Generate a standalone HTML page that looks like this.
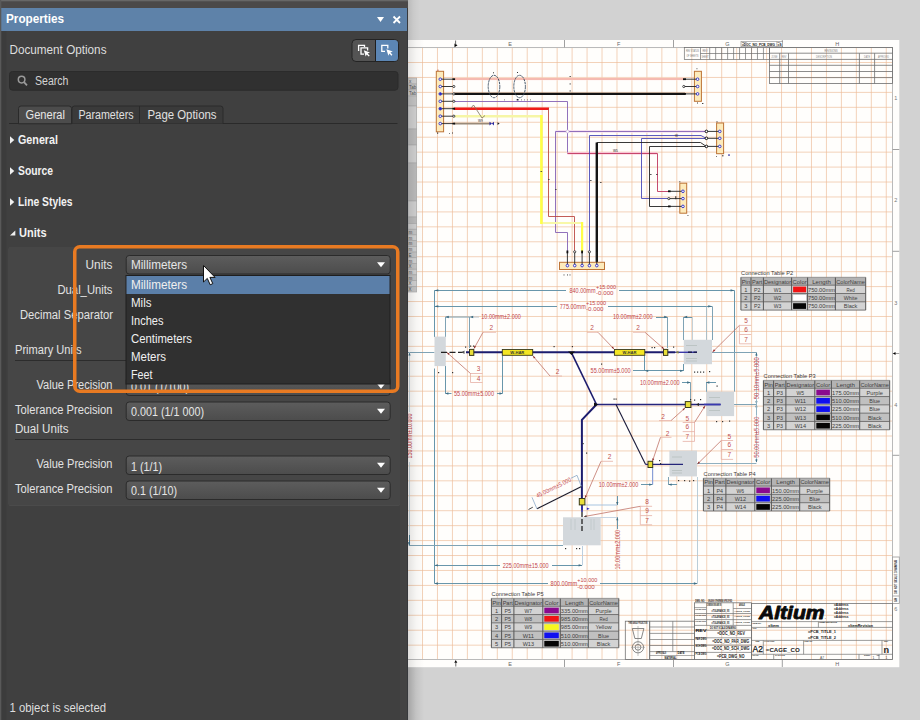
<!DOCTYPE html>
<html><head><meta charset="utf-8"><title>Properties</title>
<style>
html,body{margin:0;padding:0;background:#d2d2d2;overflow:hidden}
svg{display:block;font-family:"Liberation Sans",sans-serif}
</style></head><body>
<svg width="920" height="720" viewBox="0 0 920 720">
<defs>
<linearGradient id="ddg" x1="0" y1="0" x2="0" y2="1"><stop offset="0" stop-color="#5d5d5d"/><stop offset="1" stop-color="#4c4c4c"/></linearGradient>
<pattern id="grid" x="422" y="62" width="14.96" height="14.94" patternUnits="userSpaceOnUse"><path d="M0 0.5 H15 M0.5 0 V15" stroke="#ecb994" stroke-width="0.65" fill="none"/></pattern>
<linearGradient id="shd" x1="0" y1="0" x2="1" y2="0"><stop offset="0" stop-color="#000" stop-opacity="0.22"/><stop offset="0.5" stop-color="#000" stop-opacity="0.07"/><stop offset="1" stop-color="#000" stop-opacity="0"/></linearGradient>
</defs>
<rect x="0" y="0" width="920" height="720" fill="#d2d2d2"/>
<rect x="400" y="40" width="499.3" height="627.2" fill="#fffefc"/>
<rect x="408" y="47.5" width="484.5" height="612" fill="url(#grid)"/>
<path d="M400 47.5 H892.5 V659.5 H400" fill="none" stroke="#bababa" stroke-width="1"/>
<line x1="564.5" y1="40" x2="564.5" y2="47.5" stroke="#a0a0a0" stroke-width="1"/>
<line x1="564.5" y1="659.5" x2="564.5" y2="667" stroke="#a0a0a0" stroke-width="1"/>
<line x1="673.5" y1="40" x2="673.5" y2="47.5" stroke="#a0a0a0" stroke-width="1"/>
<line x1="673.5" y1="659.5" x2="673.5" y2="667" stroke="#a0a0a0" stroke-width="1"/>
<line x1="782.3" y1="40" x2="782.3" y2="47.5" stroke="#a0a0a0" stroke-width="1"/>
<line x1="782.3" y1="659.5" x2="782.3" y2="667" stroke="#a0a0a0" stroke-width="1"/>
<text x="510" y="46.3" font-size="5.5" fill="#666" text-anchor="middle">E</text>
<text x="510" y="666" font-size="5.5" fill="#666" text-anchor="middle">E</text>
<text x="618.7" y="46.3" font-size="5.5" fill="#666" text-anchor="middle">F</text>
<text x="618.7" y="666" font-size="5.5" fill="#666" text-anchor="middle">F</text>
<text x="727.5" y="46.3" font-size="5.5" fill="#666" text-anchor="middle">G</text>
<text x="727.5" y="666" font-size="5.5" fill="#666" text-anchor="middle">G</text>
<text x="837.3" y="46.3" font-size="5.5" fill="#666" text-anchor="middle">H</text>
<text x="837.3" y="666" font-size="5.5" fill="#666" text-anchor="middle">H</text>
<polygon points="454.5,43.5 457.5,45.3 454.5,47.2" fill="#000"/>
<line x1="455.6" y1="40.5" x2="455.6" y2="45" stroke="#444" stroke-width="0.8"/>
<polygon points="454.3,662.8 457.3,662.8 455.8,660" fill="#000"/>
<line x1="455.8" y1="662" x2="455.8" y2="666.5" stroke="#444" stroke-width="0.8"/>
<line x1="892.5" y1="149.5" x2="899.3" y2="149.5" stroke="#a0a0a0" stroke-width="1"/>
<line x1="892.5" y1="251.3" x2="899.3" y2="251.3" stroke="#a0a0a0" stroke-width="1"/>
<line x1="892.5" y1="353.5" x2="899.3" y2="353.5" stroke="#a0a0a0" stroke-width="1"/>
<line x1="892.5" y1="455.3" x2="899.3" y2="455.3" stroke="#a0a0a0" stroke-width="1"/>
<text x="895.7" y="100" font-size="5.5" fill="#777" text-anchor="middle">1</text>
<text x="895.7" y="202" font-size="5.5" fill="#777" text-anchor="middle">2</text>
<text x="895.7" y="305" font-size="5.5" fill="#777" text-anchor="middle">3</text>
<text x="895.7" y="407" font-size="5.5" fill="#777" text-anchor="middle">4</text>
<text x="895.7" y="611" font-size="5.5" fill="#777" text-anchor="middle">6</text>
<polygon points="893,353.5 895.5,352 895.5,355" fill="#000"/>
<rect x="892.5" y="557" width="6.8" height="46.5" fill="#fffefc" stroke="#999" stroke-width="0.8"/>
<line x1="892.5" y1="596" x2="899" y2="596" stroke="#999" stroke-width="0.8"/>
<text x="0" y="0" font-size="3.2" fill="#333" font-weight="bold" textLength="34" lengthAdjust="spacingAndGlyphs" transform="translate(897.3,594) rotate(-90)">DO NOT SCALE DRAWING</text>
<text x="0" y="0" font-size="3" fill="#333" font-weight="bold" transform="translate(897.3,602) rotate(-90)">SH</text>
<rect x="408" y="78" width="8.7" height="214" fill="#c9c9c9"/>
<rect x="408" y="78" width="8.7" height="6" fill="#d2d2d2" stroke="#ababab" stroke-width="0.6"/>
<rect x="408" y="84" width="8.7" height="6" fill="#c6c6c6" stroke="#ababab" stroke-width="0.6"/>
<rect x="408" y="90" width="8.7" height="6" fill="#d2d2d2" stroke="#ababab" stroke-width="0.6"/>
<rect x="408" y="96" width="8.7" height="10" fill="#c6c6c6" stroke="#ababab" stroke-width="0.6"/>
<rect x="408" y="106" width="8.7" height="23" fill="#d2d2d2" stroke="#ababab" stroke-width="0.6"/>
<rect x="408" y="129" width="8.7" height="16" fill="#bdbdbd" stroke="#ababab" stroke-width="0.6"/>
<rect x="408" y="145" width="8.7" height="18" fill="#d2d2d2" stroke="#ababab" stroke-width="0.6"/>
<rect x="408" y="163" width="8.7" height="38" fill="#bdbdbd" stroke="#ababab" stroke-width="0.6"/>
<rect x="408" y="201" width="8.7" height="16" fill="#d2d2d2" stroke="#ababab" stroke-width="0.6"/>
<rect x="408" y="217" width="8.7" height="6.5" fill="#bdbdbd" stroke="#ababab" stroke-width="0.6"/>
<rect x="408" y="223.5" width="8.7" height="5.71" fill="#d2d2d2" stroke="#ababab" stroke-width="0.6"/>
<rect x="408" y="229.21" width="8.7" height="5.71" fill="#c6c6c6" stroke="#ababab" stroke-width="0.6"/>
<rect x="408" y="234.92" width="8.7" height="5.71" fill="#d2d2d2" stroke="#ababab" stroke-width="0.6"/>
<rect x="408" y="240.63" width="8.7" height="5.71" fill="#c6c6c6" stroke="#ababab" stroke-width="0.6"/>
<rect x="408" y="246.34" width="8.7" height="5.71" fill="#d2d2d2" stroke="#ababab" stroke-width="0.6"/>
<rect x="408" y="252.05" width="8.7" height="5.71" fill="#c6c6c6" stroke="#ababab" stroke-width="0.6"/>
<rect x="408" y="257.76" width="8.7" height="5.71" fill="#d2d2d2" stroke="#ababab" stroke-width="0.6"/>
<rect x="408" y="263.47" width="8.7" height="5.71" fill="#c6c6c6" stroke="#ababab" stroke-width="0.6"/>
<rect x="408" y="269.18" width="8.7" height="5.71" fill="#d2d2d2" stroke="#ababab" stroke-width="0.6"/>
<rect x="408" y="274.89" width="8.7" height="5.71" fill="#c6c6c6" stroke="#ababab" stroke-width="0.6"/>
<rect x="408" y="280.6" width="8.7" height="5.71" fill="#d2d2d2" stroke="#ababab" stroke-width="0.6"/>
<rect x="408" y="286.31" width="8.7" height="5.71" fill="#c6c6c6" stroke="#ababab" stroke-width="0.6"/>
<text x="409" y="83" font-size="4.5" fill="#555">x</text>
<text x="409" y="89" font-size="4.5" fill="#555">Tab</text>
<text x="409" y="95" font-size="4.5" fill="#555">Tab</text>
<text x="408.6" y="234.01" font-size="4.5" fill="#555">m</text>
<text x="408.6" y="239.72" font-size="4.5" fill="#555">m</text>
<text x="408.6" y="245.43" font-size="4.5" fill="#555">m</text>
<text x="408.6" y="251.14" font-size="4.5" fill="#555">m</text>
<text x="408.6" y="256.85" font-size="4.5" fill="#555">E</text>
<text x="408.6" y="262.56" font-size="4.5" fill="#555">m</text>
<text x="408.6" y="268.27" font-size="4.5" fill="#555">X</text>
<text x="408.6" y="273.98" font-size="4.5" fill="#555">m</text>
<text x="408.6" y="279.69" font-size="4.5" fill="#555">m</text>
<text x="408.6" y="285.4" font-size="4.5" fill="#555">X</text>
<text x="408.6" y="291.11" font-size="4.5" fill="#555">X</text>
<line x1="454" y1="79" x2="684" y2="79" stroke="#fde8e4" stroke-width="2.4"/>
<line x1="454" y1="79" x2="684" y2="79" stroke="#ee8c7c" stroke-width="1"/>
<line x1="454" y1="93.9" x2="685" y2="93.9" stroke="#141414" stroke-width="2.3"/>
<polyline points="454,101.5 567.5,101.5 567.5,153.5" fill="none" stroke="#8462b4" stroke-width="0.9"/>
<polyline points="567.5,153.3 657,153.3" fill="none" stroke="#f9c4d4" stroke-width="2.6"/>
<polyline points="567.5,153.5 657.5,153.5 657.5,191.5 668.5,191.5" fill="none" stroke="#c03860" stroke-width="0.9"/>
<polyline points="555.6,131.4 706.4,131.4" fill="none" stroke="#f6e2f0" stroke-width="2.6"/>
<polyline points="567.5,252 567.5,232.5 555.5,232.5 555.5,131.5 706.4,131.5" fill="none" stroke="#8462b4" stroke-width="0.9"/>
<circle cx="567.5" cy="131.5" r="1.5" fill="#ffffff" stroke="#c8b0d8" stroke-width="0.7"/>
<line x1="454" y1="108.7" x2="549" y2="108.7" stroke="#ee1c1c" stroke-width="2.5"/>
<polyline points="548.5,108.7 548.5,216.5 574.5,216.5 574.5,252" fill="none" stroke="#bc4a44" stroke-width="0.9"/>
<line x1="454" y1="116.2" x2="542.6" y2="116.2" stroke="#f6f6a6" stroke-width="2.4"/>
<line x1="541.4" y1="223" x2="583" y2="223" stroke="#f8f8a8" stroke-width="2"/>
<line x1="541.4" y1="115" x2="541.4" y2="224" stroke="#ffff48" stroke-width="2.6"/>
<line x1="582.1" y1="222" x2="582.1" y2="252" stroke="#ffff48" stroke-width="2.2"/>
<line x1="454" y1="123.6" x2="490" y2="123.6" stroke="#9a8a78" stroke-width="1.6"/>
<polygon points="489.5,121.8 489.5,125.4 492,123.6" fill="#2a2aa0"/>
<polygon points="494,121.8 494,125.4 491.8,123.6" fill="#2a2aa0"/>
<polygon points="497.5,122.2 497.5,125 499.7,123.6" fill="#222"/>
<polyline points="471,108 473.5,105 482,118 485,115.5" fill="none" stroke="#7a7060" stroke-width="0.8"/>
<text x="478" y="122.3" font-size="3.2" fill="#333">W9</text>
<ellipse cx="494" cy="86.5" rx="5.8" ry="11.2" fill="none" stroke="#33465a" stroke-width="0.9" stroke-dasharray="2.4 0.7"/>
<ellipse cx="519.6" cy="86.5" rx="5.8" ry="11.2" fill="none" stroke="#33465a" stroke-width="0.9" stroke-dasharray="2.4 0.7"/>
<rect x="493" y="72.3" width="1" height="1" fill="#333"/>
<rect x="517" y="72" width="1" height="1" fill="#333"/>
<rect x="516.7" y="99" width="1.8" height="1.5" fill="#223"/>
<rect x="504" y="99.5" width="0.9" height="0.8" fill="#555"/>
<rect x="521" y="99.5" width="0.9" height="0.8" fill="#555"/>
<rect x="524" y="99.5" width="0.9" height="0.8" fill="#555"/>
<rect x="527" y="99.5" width="0.9" height="0.8" fill="#555"/>
<rect x="530" y="99.5" width="0.9" height="0.8" fill="#555"/>
<rect x="569.5" y="76" width="1.4" height="0.9" fill="#444"/>
<rect x="569.5" y="83.5" width="1.4" height="0.9" fill="#444"/>
<rect x="569.5" y="90.5" width="1.4" height="0.9" fill="#444"/>
<polyline points="589.5,252 589.5,135.5 701,135.5 706.4,138.5" fill="none" stroke="#4a4ab8" stroke-width="0.9"/>
<polyline points="668.5,198.5 641.5,198.5 641.5,138.5 706.4,138.5" fill="none" stroke="#4a4ab8" stroke-width="0.9"/>
<line x1="596.8" y1="142.5" x2="596.8" y2="262" stroke="#141414" stroke-width="2.4"/>
<polyline points="596.8,142.5 700.5,142.5 706.4,146.5" fill="none" stroke="#222" stroke-width="0.9"/>
<polyline points="668.5,206.5 649.5,206.5 649.5,146.5 706.4,146.5" fill="none" stroke="#222" stroke-width="0.9"/>
<text x="613" y="151.7" font-size="3.2" fill="#222">W5</text>
<text x="675" y="137" font-size="3" fill="#222">W</text>
<rect x="540.5" y="171" width="1.6" height="0.8" fill="#333"/>
<rect x="548" y="179" width="1.6" height="0.8" fill="#333"/>
<rect x="555" y="189" width="1.6" height="0.8" fill="#333"/>
<rect x="590" y="180" width="1.6" height="0.8" fill="#333"/>
<rect x="600" y="182" width="1.6" height="0.8" fill="#333"/>
<rect x="650" y="174" width="1.6" height="0.8" fill="#333"/>
<rect x="656" y="174" width="1.6" height="0.8" fill="#333"/>
<rect x="436.3" y="71.3" width="7.3" height="60.5" fill="#fdebbc" stroke="#bd7436" stroke-width="1"/>
<line x1="440.25" y1="79.2" x2="453.8" y2="79.2" stroke="#222" stroke-width="0.9"/>
<circle cx="440.25" cy="79.2" r="1.3" fill="#ffffff" stroke="#2828c8" stroke-width="0.9"/>
<line x1="440.25" y1="86.5" x2="453.8" y2="86.5" stroke="#222" stroke-width="0.9"/>
<circle cx="440.25" cy="86.5" r="1.3" fill="#ffffff" stroke="#2828c8" stroke-width="0.9"/>
<line x1="440.25" y1="93.9" x2="453.8" y2="93.9" stroke="#222" stroke-width="0.9"/>
<circle cx="440.25" cy="93.9" r="1.3" fill="#ffffff" stroke="#2828c8" stroke-width="0.9"/>
<line x1="440.25" y1="101.3" x2="453.8" y2="101.3" stroke="#222" stroke-width="0.9"/>
<circle cx="440.25" cy="101.3" r="1.3" fill="#ffffff" stroke="#2828c8" stroke-width="0.9"/>
<line x1="440.25" y1="108.7" x2="453.8" y2="108.7" stroke="#222" stroke-width="0.9"/>
<circle cx="440.25" cy="108.7" r="1.3" fill="#ffffff" stroke="#2828c8" stroke-width="0.9"/>
<line x1="440.25" y1="116.2" x2="453.8" y2="116.2" stroke="#222" stroke-width="0.9"/>
<circle cx="440.25" cy="116.2" r="1.3" fill="#ffffff" stroke="#2828c8" stroke-width="0.9"/>
<line x1="440.25" y1="123.6" x2="453.8" y2="123.6" stroke="#222" stroke-width="0.9"/>
<circle cx="440.25" cy="123.6" r="1.3" fill="#ffffff" stroke="#2828c8" stroke-width="0.9"/>
<rect x="452.5" y="78.3" width="2.6" height="1.8" fill="#111"/>
<circle cx="453.8" cy="86.5" r="1.1" fill="#fff" stroke="#222" stroke-width="0.8"/>
<circle cx="453.8" cy="93.9" r="1.1" fill="#fff" stroke="#222" stroke-width="0.8"/>
<circle cx="453.8" cy="101.3" r="1.1" fill="#fff" stroke="#222" stroke-width="0.8"/>
<rect x="452.5" y="107.8" width="2.6" height="1.8" fill="#111"/>
<circle cx="453.8" cy="116.2" r="1.1" fill="#fff" stroke="#222" stroke-width="0.8"/>
<rect x="452.5" y="122.7" width="2.6" height="1.8" fill="#111"/>
<circle cx="440.3" cy="108.7" r="1.3" fill="#2828c8"/>
<circle cx="440.3" cy="93.9" r="1.1" fill="#2828c8"/>
<rect x="437.5" y="69.7" width="1" height="1" fill="#a33"/>
<rect x="437" y="132.5" width="1.2" height="1.2" fill="#333"/>
<rect x="452" y="132.5" width="1" height="1" fill="#333"/>
<rect x="449" y="133" width="0.8" height="0.8" fill="#333"/>
<rect x="694.4" y="71.3" width="7" height="30" fill="#fdebbc" stroke="#bd7436" stroke-width="1"/>
<line x1="697.6" y1="79.2" x2="683.6" y2="79.2" stroke="#222" stroke-width="0.9"/>
<circle cx="697.6" cy="79.2" r="1.3" fill="#ffffff" stroke="#2828c8" stroke-width="0.9"/>
<line x1="697.6" y1="86.5" x2="683.6" y2="86.5" stroke="#222" stroke-width="0.9"/>
<circle cx="697.6" cy="86.5" r="1.3" fill="#ffffff" stroke="#2828c8" stroke-width="0.9"/>
<line x1="697.6" y1="93.9" x2="683.6" y2="93.9" stroke="#222" stroke-width="0.9"/>
<circle cx="697.6" cy="93.9" r="1.3" fill="#ffffff" stroke="#2828c8" stroke-width="0.9"/>
<rect x="683" y="78.3" width="3" height="1.8" fill="#111"/>
<circle cx="683.8" cy="86.5" r="1.1" fill="#fff" stroke="#222" stroke-width="0.8"/>
<rect x="683" y="93" width="3" height="1.8" fill="#111"/>
<rect x="696.5" y="68.3" width="0.9" height="0.9" fill="#333"/>
<rect x="697" y="102.5" width="1" height="1" fill="#333"/>
<rect x="702" y="103" width="1.4" height="0.9" fill="#333"/>
<rect x="716.6" y="123" width="7" height="30.7" fill="#fdebbc" stroke="#bd7436" stroke-width="1"/>
<line x1="719.8" y1="131.4" x2="706.4" y2="131.4" stroke="#222" stroke-width="0.9"/>
<circle cx="719.8" cy="131.4" r="1.3" fill="#ffffff" stroke="#2828c8" stroke-width="0.9"/>
<line x1="719.8" y1="138.3" x2="706.4" y2="138.3" stroke="#222" stroke-width="0.9"/>
<circle cx="719.8" cy="138.3" r="1.3" fill="#ffffff" stroke="#2828c8" stroke-width="0.9"/>
<line x1="719.8" y1="146.4" x2="706.4" y2="146.4" stroke="#222" stroke-width="0.9"/>
<circle cx="719.8" cy="146.4" r="1.3" fill="#ffffff" stroke="#2828c8" stroke-width="0.9"/>
<circle cx="706.4" cy="131.4" r="1.3" fill="#fff" stroke="#111" stroke-width="1"/>
<circle cx="706.4" cy="138.3" r="1.3" fill="#fff" stroke="#111" stroke-width="1"/>
<circle cx="706.4" cy="146.4" r="1.3" fill="#fff" stroke="#111" stroke-width="1"/>
<rect x="716.5" y="121.3" width="1" height="1" fill="#333"/>
<rect x="722" y="155.3" width="1.5" height="1" fill="#333"/>
<rect x="728" y="154.5" width="2" height="1.1" fill="#2a2aa0"/>
<rect x="716" y="156" width="0.9" height="0.9" fill="#555"/>
<rect x="679.8" y="183.2" width="6.9" height="30" fill="#fdebbc" stroke="#bd7436" stroke-width="1"/>
<line x1="682.95" y1="191.3" x2="668.5" y2="191.3" stroke="#222" stroke-width="0.9"/>
<circle cx="682.95" cy="191.3" r="1.3" fill="#ffffff" stroke="#2828c8" stroke-width="0.9"/>
<line x1="682.95" y1="198.6" x2="668.5" y2="198.6" stroke="#222" stroke-width="0.9"/>
<circle cx="682.95" cy="198.6" r="1.3" fill="#ffffff" stroke="#2828c8" stroke-width="0.9"/>
<line x1="682.95" y1="206.4" x2="668.5" y2="206.4" stroke="#222" stroke-width="0.9"/>
<circle cx="682.95" cy="206.4" r="1.3" fill="#ffffff" stroke="#2828c8" stroke-width="0.9"/>
<rect x="668" y="190.4" width="2.6" height="1.8" fill="#111"/>
<circle cx="668.8" cy="198.6" r="1.1" fill="#fff" stroke="#222" stroke-width="0.8"/>
<rect x="668" y="205.5" width="2.6" height="1.8" fill="#111"/>
<rect x="675.3" y="196.2" width="1" height="3" fill="#222"/>
<rect x="679.3" y="181.3" width="1" height="1" fill="#333"/>
<rect x="687.5" y="215" width="0.9" height="0.9" fill="#333"/>
<rect x="559.5" y="262.3" width="45" height="7.2" fill="#fdebbc" stroke="#bd7436" stroke-width="1"/>
<line x1="567.4" y1="252" x2="567.4" y2="265.6" stroke="#222" stroke-width="0.9"/>
<circle cx="567.4" cy="265.6" r="1.3" fill="#fff" stroke="#2828c8" stroke-width="0.9"/>
<rect x="566.5" y="250.5" width="1.8" height="2.8" fill="#111"/>
<line x1="574.7" y1="252" x2="574.7" y2="265.6" stroke="#222" stroke-width="0.9"/>
<circle cx="574.7" cy="265.6" r="1.3" fill="#fff" stroke="#2828c8" stroke-width="0.9"/>
<circle cx="574.7" cy="251.8" r="1.1" fill="#fff" stroke="#222" stroke-width="0.8"/>
<line x1="582.1" y1="252" x2="582.1" y2="265.6" stroke="#222" stroke-width="0.9"/>
<circle cx="582.1" cy="265.6" r="1.3" fill="#fff" stroke="#2828c8" stroke-width="0.9"/>
<rect x="581.2" y="250.5" width="1.8" height="2.8" fill="#111"/>
<line x1="589.4" y1="252" x2="589.4" y2="265.6" stroke="#222" stroke-width="0.9"/>
<circle cx="589.4" cy="265.6" r="1.3" fill="#fff" stroke="#2828c8" stroke-width="0.9"/>
<circle cx="589.4" cy="251.8" r="1.1" fill="#fff" stroke="#222" stroke-width="0.8"/>
<line x1="596.8" y1="252" x2="596.8" y2="265.6" stroke="#222" stroke-width="0.9"/>
<circle cx="596.8" cy="265.6" r="1.3" fill="#fff" stroke="#2828c8" stroke-width="0.9"/>
<rect x="563.5" y="274.5" width="1" height="0.9" fill="#333"/>
<rect x="567" y="274.5" width="1" height="0.9" fill="#333"/>
<rect x="569.5" y="274.5" width="1" height="0.9" fill="#333"/>
<line x1="434.5" y1="290.5" x2="566" y2="290.5" stroke="#6896ab" stroke-width="1"/>
<line x1="619" y1="290.5" x2="734.4" y2="290.5" stroke="#6896ab" stroke-width="1"/>
<line x1="434.5" y1="290.4" x2="434.5" y2="337" stroke="#6896ab" stroke-width="1"/>
<line x1="734.5" y1="290.4" x2="734.5" y2="352" stroke="#6896ab" stroke-width="1"/>
<polygon points="434.5,290.4 438.32,289.25 438.32,291.55" fill="#3f6f86"/>
<polygon points="734.4,290.4 730.57,291.55 730.57,289.25" fill="#3f6f86"/>
<line x1="434.5" y1="306.5" x2="557" y2="306.5" stroke="#6896ab" stroke-width="1"/>
<line x1="608" y1="306.5" x2="712" y2="306.5" stroke="#6896ab" stroke-width="1"/>
<polygon points="434.5,306.3 438.32,305.15 438.32,307.45" fill="#3f6f86"/>
<polygon points="712,306.3 708.17,307.45 708.17,305.15" fill="#3f6f86"/>
<line x1="712.5" y1="306.3" x2="712.5" y2="340" stroke="#7fa3b5" stroke-width="1"/>
<line x1="706.5" y1="306.3" x2="706.5" y2="340" stroke="#9ab8c6" stroke-width="0.8"/>
<line x1="445.4" y1="317" x2="469.8" y2="317" stroke="#9db4be" stroke-width="1.4"/>
<line x1="469.8" y1="317" x2="479" y2="317" stroke="#c5ccd0" stroke-width="1.2"/>
<line x1="445.5" y1="317" x2="445.5" y2="337" stroke="#7fa3b5" stroke-width="1"/>
<line x1="469.5" y1="317" x2="469.5" y2="348" stroke="#7fa3b5" stroke-width="1"/>
<polygon points="445.4,317 448.8,315.85 448.8,318.15" fill="#3f6f86"/>
<polygon points="469.8,317 473.2,315.85 473.2,318.15" fill="#3f6f86"/>
<line x1="434.5" y1="368.5" x2="434.5" y2="583.5" stroke="#6896ab" stroke-width="1"/>
<line x1="408" y1="352.5" x2="434.5" y2="352.5" stroke="#7fa3b5" stroke-width="1"/>
<line x1="445.5" y1="366" x2="445.5" y2="393.5" stroke="#6896ab" stroke-width="1"/>
<line x1="502.5" y1="355.5" x2="502.5" y2="393.5" stroke="#6896ab" stroke-width="1"/>
<line x1="445.4" y1="393.5" x2="451.5" y2="393.5" stroke="#6896ab" stroke-width="1"/>
<line x1="497" y1="393.5" x2="502.5" y2="393.5" stroke="#6896ab" stroke-width="1"/>
<polygon points="445.4,393.5 448.38,392.35 448.38,394.65" fill="#3f6f86"/>
<polygon points="502.5,393.5 499.52,394.65 499.52,392.35" fill="#3f6f86"/>
<line x1="656" y1="317.5" x2="667.6" y2="317.5" stroke="#6896ab" stroke-width="1"/>
<line x1="667.5" y1="317" x2="667.5" y2="348" stroke="#7fa3b5" stroke-width="1"/>
<polygon points="667.6,317 664.2,318.15 664.2,315.85" fill="#3f6f86"/>
<line x1="683.8" y1="317.5" x2="692" y2="317.5" stroke="#6896ab" stroke-width="1"/>
<line x1="683.5" y1="317" x2="683.5" y2="340" stroke="#7fa3b5" stroke-width="1"/>
<line x1="692.5" y1="317" x2="692.5" y2="340" stroke="#b5c8d2" stroke-width="0.8"/>
<polygon points="683.8,317 687.2,315.85 687.2,318.15" fill="#3f6f86"/>
<line x1="644.5" y1="355.5" x2="644.5" y2="371" stroke="#6896ab" stroke-width="1"/>
<line x1="683.5" y1="364" x2="683.5" y2="371" stroke="#6896ab" stroke-width="1"/>
<line x1="633" y1="370.5" x2="683.5" y2="370.5" stroke="#6896ab" stroke-width="1"/>
<polygon points="644.8,370.8 648.2,369.65 648.2,371.95" fill="#3f6f86"/>
<polygon points="683.5,370.8 680.1,371.95 680.1,369.65" fill="#3f6f86"/>
<line x1="712" y1="352.5" x2="734.4" y2="352.5" stroke="#7fa3b5" stroke-width="1"/>
<line x1="682" y1="382.5" x2="690.5" y2="382.5" stroke="#6896ab" stroke-width="1"/>
<line x1="690.5" y1="382.5" x2="690.5" y2="401" stroke="#7fa3b5" stroke-width="1"/>
<polygon points="690.5,382.5 687.1,383.65 687.1,381.35" fill="#3f6f86"/>
<line x1="706" y1="382.5" x2="716" y2="382.5" stroke="#6896ab" stroke-width="1"/>
<line x1="706.5" y1="382.5" x2="706.5" y2="392" stroke="#7fa3b5" stroke-width="1"/>
<polygon points="706,382.5 709.4,381.35 709.4,383.65" fill="#3f6f86"/>
<line x1="641" y1="484.5" x2="652.6" y2="484.5" stroke="#6896ab" stroke-width="1"/>
<line x1="652.6" y1="467.5" x2="652.6" y2="484.6" stroke="#8aa0d8" stroke-width="1.2"/>
<polygon points="652.6,484.6 649.2,485.75 649.2,483.45" fill="#3f6f86"/>
<line x1="668.3" y1="484.5" x2="677" y2="484.5" stroke="#6896ab" stroke-width="1"/>
<line x1="668.5" y1="477" x2="668.5" y2="484.6" stroke="#7fa3b5" stroke-width="1"/>
<polygon points="668.3,484.6 671.7,483.45 671.7,485.75" fill="#3f6f86"/>
<line x1="734.4" y1="352.5" x2="756.4" y2="352.5" stroke="#7fa3b5" stroke-width="1"/>
<line x1="734.5" y1="352" x2="734.5" y2="391.6" stroke="#7fa3b5" stroke-width="1"/>
<line x1="756.5" y1="352.5" x2="756.5" y2="356.5" stroke="#6896ab" stroke-width="1"/>
<line x1="756.5" y1="400" x2="756.5" y2="415" stroke="#6896ab" stroke-width="1"/>
<line x1="756.5" y1="458.5" x2="756.5" y2="462" stroke="#6896ab" stroke-width="1"/>
<polygon points="756.4,352.5 757.55,355.48 755.25,355.48" fill="#3f6f86"/>
<polygon points="756.4,404.3 755.25,401.32 757.55,401.32" fill="#3f6f86"/>
<polygon points="756.4,404.3 757.55,407.28 755.25,407.28" fill="#3f6f86"/>
<polygon points="756.4,462.5 755.25,459.52 757.55,459.52" fill="#3f6f86"/>
<line x1="734" y1="404.5" x2="756.4" y2="404.5" stroke="#7fa3b5" stroke-width="1"/>
<line x1="697" y1="463.5" x2="756.4" y2="463.5" stroke="#8fb0c0" stroke-width="1"/>
<line x1="756.5" y1="356.5" x2="756.5" y2="458.5" stroke="#9dbccb" stroke-width="0.8"/>
<line x1="408.8" y1="545.5" x2="563" y2="545.5" stroke="#7fa3b5" stroke-width="1"/>
<line x1="409.5" y1="535" x2="409.5" y2="545" stroke="#4f7f96" stroke-width="1"/>
<polygon points="409,545.2 407.85,542.23 410.15,542.23" fill="#3f6f86"/>
<line x1="409.5" y1="352" x2="409.5" y2="412" stroke="#bccfd9" stroke-width="0.8"/>
<line x1="409.5" y1="462" x2="409.5" y2="535" stroke="#bccfd9" stroke-width="0.8"/>
<polygon points="409.5,352.5 410.65,355.48 408.35,355.48" fill="#3f6f86"/>
<line x1="434.5" y1="565.5" x2="500" y2="565.5" stroke="#6896ab" stroke-width="1"/>
<line x1="552" y1="565.5" x2="582" y2="565.5" stroke="#6896ab" stroke-width="1"/>
<polygon points="434.5,565.3 437.9,564.15 437.9,566.45" fill="#3f6f86"/>
<polygon points="582,565.3 578.6,566.45 578.6,564.15" fill="#3f6f86"/>
<line x1="582.5" y1="546" x2="582.5" y2="565.3" stroke="#bccfe0" stroke-width="1"/>
<line x1="434.5" y1="583.5" x2="548" y2="583.5" stroke="#6896ab" stroke-width="1"/>
<line x1="600" y1="583.5" x2="697.3" y2="583.5" stroke="#6896ab" stroke-width="1"/>
<polygon points="434.5,583.5 437.9,582.35 437.9,584.65" fill="#3f6f86"/>
<polygon points="697.3,583.5 693.9,584.65 693.9,582.35" fill="#3f6f86"/>
<line x1="697.5" y1="477" x2="697.5" y2="583.5" stroke="#b3c8d5" stroke-width="0.9"/>
<line x1="585" y1="505" x2="617.3" y2="505" stroke="#a8c4e0" stroke-width="1.2"/>
<line x1="585" y1="517.5" x2="617.3" y2="517.5" stroke="#c0d0e0" stroke-width="0.9"/>
<line x1="617.5" y1="496" x2="617.5" y2="505" stroke="#6896ab" stroke-width="1"/>
<line x1="617.5" y1="517.3" x2="617.5" y2="529" stroke="#6896ab" stroke-width="1"/>
<polygon points="617.3,505 616.15,502.02 618.45,502.02" fill="#3f6f86"/>
<polygon points="617.3,517.3 618.45,520.27 616.15,520.27" fill="#3f6f86"/>
<text x="569.5" y="292.6" font-size="6.5" fill="#c2454a" textLength="26" lengthAdjust="spacingAndGlyphs">840.00mm</text>
<text x="596" y="288.8" font-size="5.8" fill="#c2454a" textLength="20" lengthAdjust="spacingAndGlyphs">+15.000</text>
<text x="596" y="295.2" font-size="5.8" fill="#c2454a" textLength="17.5" lengthAdjust="spacingAndGlyphs">-0.000</text>
<text x="559.8" y="308.6" font-size="6.5" fill="#c2454a" textLength="26" lengthAdjust="spacingAndGlyphs">775.00mm</text>
<text x="586" y="304.8" font-size="5.8" fill="#c2454a" textLength="20" lengthAdjust="spacingAndGlyphs">+15.000</text>
<text x="586" y="311.2" font-size="5.8" fill="#c2454a" textLength="17.5" lengthAdjust="spacingAndGlyphs">-0.000</text>
<text x="481.3" y="319.3" font-size="6.5" fill="#c2454a" textLength="39.5" lengthAdjust="spacingAndGlyphs">10.00mm±2.000</text>
<text x="613" y="319.3" font-size="6.5" fill="#c2454a" textLength="39.5" lengthAdjust="spacingAndGlyphs">10.00mm±2.000</text>
<text x="454" y="395.7" font-size="6.5" fill="#c2454a" textLength="40" lengthAdjust="spacingAndGlyphs">55.00mm±5.000</text>
<text x="590.6" y="373" font-size="6.5" fill="#c2454a" textLength="40" lengthAdjust="spacingAndGlyphs">55.00mm±5.000</text>
<text x="640" y="385" font-size="6.5" fill="#c2454a" textLength="39.5" lengthAdjust="spacingAndGlyphs">10.00mm±2.000</text>
<text x="598.8" y="487.2" font-size="6.5" fill="#c2454a" textLength="39.5" lengthAdjust="spacingAndGlyphs">10.00mm±2.000</text>
<text x="502.7" y="567.6" font-size="6.5" fill="#c2454a" textLength="46" lengthAdjust="spacingAndGlyphs">225.00mm±15.000</text>
<text x="550.6" y="585.8" font-size="6.5" fill="#c2454a" textLength="26.5" lengthAdjust="spacingAndGlyphs">800.00mm</text>
<text x="577.3" y="582" font-size="5.8" fill="#c2454a" textLength="20" lengthAdjust="spacingAndGlyphs">+10.000</text>
<text x="577.3" y="588.5" font-size="5.8" fill="#c2454a" textLength="17.5" lengthAdjust="spacingAndGlyphs">-0.000</text>
<text x="0" y="0" font-size="6.5" fill="#c2454a" textLength="39.5" lengthAdjust="spacingAndGlyphs" transform="translate(619.5,569.5) rotate(-90)">10.00mm±2.000</text>
<text x="0" y="0" font-size="6.5" fill="#c2454a" textLength="41" lengthAdjust="spacingAndGlyphs" transform="translate(758.7,457.7) rotate(-90)">50.00mm±5.000</text>
<text x="0" y="0" font-size="6.5" fill="#c2454a" textLength="42" lengthAdjust="spacingAndGlyphs" transform="translate(758.7,399.3) rotate(-90)">50.10mm±5.000</text>
<text x="0" y="0" font-size="6.5" fill="#c2454a" textLength="45" lengthAdjust="spacingAndGlyphs" transform="translate(412,458.5) rotate(-90)">150.00mm±10.000</text>
<text x="0" y="0" font-size="6.2" fill="#c2454a" textLength="38" lengthAdjust="spacingAndGlyphs" transform="translate(537.5,498) rotate(-26.5)">45.00mm±5.000</text>
<rect x="434.5" y="336.6" width="11.3" height="29.5" fill="#d3d8dc"/>
<rect x="683.8" y="339.8" width="28.2" height="24.4" fill="#d3d8dc"/>
<rect x="706.3" y="391.6" width="27.8" height="24.5" fill="#d3d8dc"/>
<rect x="669.4" y="450.6" width="27.6" height="25.8" fill="#d3d8dc"/>
<rect x="563" y="517.3" width="37.7" height="28" fill="#d3d8dc"/>
<line x1="686" y1="345.5" x2="697" y2="345.5" stroke="#bcc4c4" stroke-width="1"/>
<line x1="686" y1="358.5" x2="697" y2="358.5" stroke="#bcc4c4" stroke-width="1"/>
<line x1="686" y1="361" x2="697" y2="361" stroke="#bcc4c4" stroke-width="1"/>
<line x1="709" y1="397.5" x2="720" y2="397.5" stroke="#bcc4c4" stroke-width="1"/>
<line x1="709" y1="410.5" x2="720" y2="410.5" stroke="#bcc4c4" stroke-width="1"/>
<line x1="672" y1="457" x2="682" y2="457" stroke="#bcc4c4" stroke-width="1"/>
<line x1="672" y1="470.5" x2="682" y2="470.5" stroke="#bcc4c4" stroke-width="1"/>
<line x1="672" y1="473" x2="682" y2="473" stroke="#bcc4c4" stroke-width="1"/>
<line x1="571" y1="519" x2="571" y2="530" stroke="#c2cacc" stroke-width="1"/>
<line x1="575" y1="519" x2="575" y2="530" stroke="#c2cacc" stroke-width="1"/>
<line x1="591" y1="519" x2="591" y2="530" stroke="#c2cacc" stroke-width="1"/>
<line x1="594" y1="519" x2="594" y2="530" stroke="#c2cacc" stroke-width="1"/>
<line x1="441" y1="352.3" x2="466" y2="352.3" stroke="#222" stroke-width="1.2" stroke-dasharray="6 2.5"/>
<line x1="466" y1="352.3" x2="675" y2="352.3" stroke="#1c1c6e" stroke-width="2.1"/>
<line x1="675" y1="352.3" x2="697" y2="352.3" stroke="#3a3aa8" stroke-width="1.4"/>
<line x1="688" y1="352.3" x2="697" y2="352.3" stroke="#1c1c50" stroke-width="1.6" stroke-dasharray="4 1.5"/>
<polygon points="461.5,352.3 464.5,350.6 464.5,354" fill="#555"/>
<line x1="571.3" y1="352.3" x2="596.5" y2="404.5" stroke="#1c1c6e" stroke-width="1.6"/>
<polygon points="568,351.5 575,351.5 571.5,355" fill="#111"/>
<line x1="596.5" y1="404.5" x2="720.6" y2="404.5" stroke="#25257e" stroke-width="1.3"/>
<polyline points="596.5,404.5 581.9,419.8 581.9,498.5" fill="none" stroke="#1c1c6e" stroke-width="2" stroke-linejoin="miter"/>
<polygon points="594,402.5 598.5,404.5 594,406.5" fill="#111"/>
<line x1="616" y1="404.5" x2="645.6" y2="464.4" stroke="#1a1a3a" stroke-width="1.1"/>
<line x1="645.6" y1="464.4" x2="683" y2="464.4" stroke="#24247a" stroke-width="1.3"/>
<line x1="704" y1="404.5" x2="720.6" y2="404.5" stroke="#3a3ab0" stroke-width="1.6"/>
<line x1="582" y1="505" x2="582" y2="531" stroke="#222" stroke-width="1.3" stroke-dasharray="5 2"/>
<line x1="582" y1="505" x2="582" y2="512" stroke="#2a2a9a" stroke-width="1.6"/>
<line x1="581.5" y1="486.5" x2="537" y2="508.8" stroke="#1a1a2a" stroke-width="1.1"/>
<line x1="577" y1="475.3" x2="581.3" y2="486.3" stroke="#8aa8c8" stroke-width="0.8"/>
<line x1="532" y1="497.3" x2="537" y2="509" stroke="#8aa8c8" stroke-width="0.8"/>
<line x1="571" y1="478.2" x2="577" y2="475.3" stroke="#8aa8c8" stroke-width="0.8"/>
<line x1="528.5" y1="509.5" x2="532.8" y2="507.2" stroke="#333" stroke-width="0.9"/>
<rect x="469.5" y="349.4" width="4.3" height="6" fill="#e8de3a" stroke="#3a3a1a" stroke-width="1"/>
<rect x="663.5" y="349.4" width="4.3" height="6" fill="#e8de3a" stroke="#3a3a1a" stroke-width="1"/>
<rect x="685.3" y="401.6" width="5.6" height="5.9" fill="#e8de3a" stroke="#3a3a1a" stroke-width="1"/>
<rect x="648" y="461.3" width="4.7" height="6.2" fill="#e8de3a" stroke="#3a3a1a" stroke-width="1"/>
<rect x="579.3" y="498.5" width="5.6" height="6.4" fill="#e8de3a" stroke="#3a3a1a" stroke-width="1"/>
<rect x="502.3" y="349.5" width="30.4" height="5.8" fill="#f4e624" stroke="#3a3a1a" stroke-width="0.9"/>
<text x="510.3" y="354" font-size="3.2" fill="#333" font-weight="bold" textLength="14" lengthAdjust="spacingAndGlyphs">W-HAR</text>
<rect x="614.4" y="349.5" width="30.4" height="5.8" fill="#f4e624" stroke="#3a3a1a" stroke-width="0.9"/>
<text x="622.4" y="354" font-size="3.2" fill="#333" font-weight="bold" textLength="14" lengthAdjust="spacingAndGlyphs">W-HAR</text>
<rect x="553.5" y="346" width="1.2" height="1.2" fill="#333"/>
<rect x="571.8" y="346" width="1.2" height="1.2" fill="#333"/>
<rect x="470" y="345.5" width="1.2" height="1.2" fill="#333"/>
<rect x="473" y="345.5" width="1.2" height="1.2" fill="#333"/>
<rect x="465" y="346.5" width="1.2" height="1.2" fill="#333"/>
<rect x="651.5" y="347" width="1.2" height="1.2" fill="#333"/>
<rect x="654" y="347" width="1.2" height="1.2" fill="#333"/>
<rect x="673" y="346.5" width="1.2" height="1.2" fill="#333"/>
<rect x="438" y="372" width="1.2" height="1.2" fill="#333"/>
<rect x="452" y="372" width="1.2" height="1.2" fill="#333"/>
<rect x="694" y="371.5" width="1.2" height="1.2" fill="#333"/>
<rect x="697" y="371.5" width="1.2" height="1.2" fill="#333"/>
<rect x="700" y="371.5" width="1.2" height="1.2" fill="#333"/>
<rect x="703" y="371.5" width="1.2" height="1.2" fill="#333"/>
<rect x="709" y="371" width="1.2" height="1.2" fill="#333"/>
<rect x="716.5" y="385.5" width="1.2" height="1.2" fill="#333"/>
<rect x="690" y="399" width="1.2" height="1.2" fill="#333"/>
<rect x="694" y="399.5" width="1.2" height="1.2" fill="#333"/>
<rect x="700" y="399" width="1.2" height="1.2" fill="#333"/>
<rect x="716" y="421" width="1.2" height="1.2" fill="#333"/>
<rect x="722" y="421" width="1.2" height="1.2" fill="#333"/>
<rect x="729" y="420.5" width="1.2" height="1.2" fill="#333"/>
<rect x="678" y="480" width="1.2" height="1.2" fill="#333"/>
<rect x="684" y="480" width="1.2" height="1.2" fill="#333"/>
<rect x="689" y="480.5" width="1.2" height="1.2" fill="#333"/>
<rect x="693" y="480" width="1.2" height="1.2" fill="#333"/>
<rect x="565" y="548" width="1.2" height="1.2" fill="#333"/>
<rect x="576" y="548" width="1.2" height="1.2" fill="#333"/>
<rect x="579" y="548" width="1.2" height="1.2" fill="#333"/>
<rect x="586" y="452.5" width="1.2" height="1.2" fill="#333"/>
<rect x="582.5" y="443" width="1.2" height="1.2" fill="#333"/>
<rect x="601" y="363.5" width="1.2" height="1.2" fill="#333"/>
<rect x="613.5" y="398.5" width="1.2" height="1.2" fill="#333"/>
<rect x="615.5" y="398.5" width="1.2" height="1.2" fill="#333"/>
<rect x="660" y="463" width="1.2" height="1.2" fill="#333"/>
<rect x="659" y="460" width="1.2" height="1.2" fill="#333"/>
<polygon points="586.8,507.5 589.6,508.8 586.8,510" fill="#2a2ac0"/>
<rect x="581" y="507" width="1.6" height="1.6" fill="#2a2ac0"/>
<polygon points="696,404.5 699,403 699,406" fill="#222"/>
<polygon points="675.5,352.3 678.5,350.8 678.5,353.8" fill="#884"/>
<text x="491.3" y="330.3" font-size="6.5" fill="#bf5250" text-anchor="middle">2</text>
<polyline points="483,332.3 496,332.3" fill="none" stroke="#e6b0a6" stroke-width="0.8"/>
<polyline points="483,332.3 474,348.5" fill="none" stroke="#c07468" stroke-width="0.8"/>
<polygon points="474,348.5 474.36,345.79 476.11,346.76" fill="#8a2a2a"/>
<text x="592" y="330.3" font-size="6.5" fill="#bf5250" text-anchor="middle">2</text>
<polyline points="587,332.3 598,332.3" fill="none" stroke="#e6b0a6" stroke-width="0.8"/>
<polyline points="598,332.3 614,349" fill="none" stroke="#c07468" stroke-width="0.8"/>
<polygon points="614,349 611.51,347.85 612.96,346.47" fill="#8a2a2a"/>
<text x="638" y="330.3" font-size="6.5" fill="#bf5250" text-anchor="middle">2</text>
<polyline points="633,332.3 645,332.3" fill="none" stroke="#e6b0a6" stroke-width="0.8"/>
<polyline points="645,332.3 664,349" fill="none" stroke="#c07468" stroke-width="0.8"/>
<polygon points="664,349 661.42,348.07 662.74,346.57" fill="#8a2a2a"/>
<text x="557.5" y="373.5" font-size="6.5" fill="#bf5250" text-anchor="middle">2</text>
<polyline points="550,376 562,376" fill="none" stroke="#e6b0a6" stroke-width="0.8"/>
<polyline points="550,376 533,356" fill="none" stroke="#c07468" stroke-width="0.8"/>
<polygon points="533,356 535.41,357.3 533.89,358.59" fill="#8a2a2a"/>
<text x="663" y="418.5" font-size="6.5" fill="#bf5250" text-anchor="middle">2</text>
<polyline points="659,420.6 671,420.6" fill="none" stroke="#e6b0a6" stroke-width="0.8"/>
<polyline points="671,420.6 685,408" fill="none" stroke="#c07468" stroke-width="0.8"/>
<polygon points="685,408 683.77,410.45 682.44,408.96" fill="#8a2a2a"/>
<text x="667.5" y="435.5" font-size="6.5" fill="#bf5250" text-anchor="middle">2</text>
<polyline points="660.5,437.3 671.5,437.3" fill="none" stroke="#e6b0a6" stroke-width="0.8"/>
<polyline points="660.5,437.3 652.5,461" fill="none" stroke="#c07468" stroke-width="0.8"/>
<polygon points="652.5,461 652.37,458.26 654.26,458.9" fill="#8a2a2a"/>
<text x="609.5" y="458.5" font-size="6.5" fill="#bf5250" text-anchor="middle">2</text>
<polyline points="601,461.3 613,461.3" fill="none" stroke="#e6b0a6" stroke-width="0.8"/>
<polyline points="601,461.3 585,498" fill="none" stroke="#c07468" stroke-width="0.8"/>
<polygon points="585,498 585.1,495.26 586.94,496.06" fill="#8a2a2a"/>
<text x="478.5" y="370.5" font-size="6.5" fill="#bf5250" text-anchor="middle">3</text>
<text x="478.5" y="380.5" font-size="6.5" fill="#bf5250" text-anchor="middle">4</text>
<polyline points="470.5,373.5 482.5,373.5" fill="none" stroke="#e6b0a6" stroke-width="0.8"/>
<polyline points="470.5,373.5 470.5,382.5 482.5,382.5" fill="none" stroke="#e6b0a6" stroke-width="0.8"/>
<polyline points="447,352.5 470.5,373.5" fill="none" stroke="#c07468" stroke-width="0.8"/>
<polygon points="447,352.5 449.57,353.45 448.24,354.94" fill="#8a2a2a"/>
<polyline points="739.4,325.4 751.2,325.4" fill="none" stroke="#e6b0a6" stroke-width="0.8"/>
<polyline points="739.4,334.5 751.2,334.5" fill="none" stroke="#e6b0a6" stroke-width="0.8"/>
<polyline points="739.4,343.8 751.2,343.8" fill="none" stroke="#e6b0a6" stroke-width="0.8"/>
<polyline points="739.4,325.4 739.4,343.8" fill="none" stroke="#e6b0a6" stroke-width="0.8"/>
<text x="746" y="323.4" font-size="6.5" fill="#bf5250" text-anchor="middle">5</text>
<text x="746" y="332.2" font-size="6.5" fill="#bf5250" text-anchor="middle">6</text>
<text x="746" y="341.5" font-size="6.5" fill="#bf5250" text-anchor="middle">7</text>
<polyline points="739.4,325.4 712.5,352" fill="none" stroke="#c07468" stroke-width="0.8"/>
<polygon points="712.5,352 713.85,349.13 715.39,350.7" fill="#a02a2a"/>
<polyline points="694.5,422.5 682.7,422.5" fill="none" stroke="#e6b0a6" stroke-width="0.8"/>
<polyline points="694.5,431.6 682.7,431.6" fill="none" stroke="#e6b0a6" stroke-width="0.8"/>
<polyline points="694.5,441.4 682.7,441.4" fill="none" stroke="#e6b0a6" stroke-width="0.8"/>
<polyline points="694.5,422.5 694.5,441.4" fill="none" stroke="#e6b0a6" stroke-width="0.8"/>
<text x="687.3" y="420.5" font-size="6.5" fill="#bf5250" text-anchor="middle">5</text>
<text x="687.3" y="429.3" font-size="6.5" fill="#bf5250" text-anchor="middle">6</text>
<text x="687.3" y="439.1" font-size="6.5" fill="#bf5250" text-anchor="middle">7</text>
<polyline points="694.5,422.5 705,406" fill="none" stroke="#c07468" stroke-width="0.8"/>
<polygon points="705,406 704.47,408.69 702.79,407.61" fill="#8a2a2a"/>
<polyline points="721.3,440.5 733.1,440.5" fill="none" stroke="#e6b0a6" stroke-width="0.8"/>
<polyline points="721.3,449.5 733.1,449.5" fill="none" stroke="#e6b0a6" stroke-width="0.8"/>
<polyline points="721.3,459.4 733.1,459.4" fill="none" stroke="#e6b0a6" stroke-width="0.8"/>
<polyline points="721.3,440.5 721.3,459.4" fill="none" stroke="#e6b0a6" stroke-width="0.8"/>
<text x="729.3" y="438.5" font-size="6.5" fill="#bf5250" text-anchor="middle">5</text>
<text x="729.3" y="447.2" font-size="6.5" fill="#bf5250" text-anchor="middle">6</text>
<text x="729.3" y="457.1" font-size="6.5" fill="#bf5250" text-anchor="middle">7</text>
<polyline points="721.3,440.5 697.5,464" fill="none" stroke="#c07468" stroke-width="0.8"/>
<polygon points="697.5,464 698.61,461.5 700.02,462.92" fill="#8a2a2a"/>
<polyline points="640.3,506.3 652.1,506.3" fill="none" stroke="#e6b0a6" stroke-width="0.8"/>
<polyline points="640.3,515.6 652.1,515.6" fill="none" stroke="#e6b0a6" stroke-width="0.8"/>
<polyline points="640.3,524.8 652.1,524.8" fill="none" stroke="#e6b0a6" stroke-width="0.8"/>
<polyline points="640.3,506.3 640.3,524.8" fill="none" stroke="#e6b0a6" stroke-width="0.8"/>
<text x="647" y="504.3" font-size="6.5" fill="#bf5250" text-anchor="middle">8</text>
<text x="647" y="513.3" font-size="6.5" fill="#bf5250" text-anchor="middle">9</text>
<text x="647" y="522.5" font-size="6.5" fill="#bf5250" text-anchor="middle">7</text>
<polyline points="640.3,506.3 584,516.6" fill="none" stroke="#c07468" stroke-width="0.8"/>
<polygon points="584,516.6 586.33,515.16 586.69,517.12" fill="#222"/>
<text x="741.1" y="275.4" font-size="5.6" fill="#3c3c3c" textLength="52" lengthAdjust="spacingAndGlyphs">Connection Table P2</text>
<rect x="740.9" y="277.3" width="124.8" height="7.9" fill="#b3b3b3"/>
<text x="745.95" y="283.5" font-size="6" fill="#3c3c3c" text-anchor="middle" textLength="8.6" lengthAdjust="spacingAndGlyphs">Pin</text>
<text x="757.2" y="283.5" font-size="6" fill="#3c3c3c" text-anchor="middle" textLength="10.2" lengthAdjust="spacingAndGlyphs">Part</text>
<text x="777.5" y="283.5" font-size="6" fill="#3c3c3c" text-anchor="middle" textLength="27.2" lengthAdjust="spacingAndGlyphs">Designator</text>
<text x="799.6" y="283.5" font-size="6" fill="#3c3c3c" text-anchor="middle" textLength="14" lengthAdjust="spacingAndGlyphs">Color</text>
<text x="821.5" y="283.5" font-size="6" fill="#3c3c3c" text-anchor="middle" textLength="18.5" lengthAdjust="spacingAndGlyphs">Length</text>
<text x="850.55" y="283.5" font-size="6" fill="#3c3c3c" text-anchor="middle" textLength="28.5" lengthAdjust="spacingAndGlyphs">ColorName</text>
<rect x="740.9" y="285.2" width="124.8" height="8.3" fill="#d3d3d3"/>
<text x="745.95" y="291.6" font-size="6.2" fill="#404040" text-anchor="middle" textLength="3.2" lengthAdjust="spacingAndGlyphs">1</text>
<text x="757.2" y="291.6" font-size="6.2" fill="#404040" text-anchor="middle" textLength="6.5" lengthAdjust="spacingAndGlyphs">P2</text>
<text x="777.5" y="291.6" font-size="6.2" fill="#404040" text-anchor="middle" textLength="7.6" lengthAdjust="spacingAndGlyphs">W1</text>
<rect x="793.1" y="286.6" width="13" height="5.7" fill="#f01414"/>
<text x="821.5" y="291.6" font-size="6.2" fill="#404040" text-anchor="middle" textLength="27" lengthAdjust="spacingAndGlyphs">750.00mm</text>
<text x="850.55" y="291.6" font-size="6.2" fill="#404040" text-anchor="middle" textLength="8.16" lengthAdjust="spacingAndGlyphs">Red</text>
<rect x="740.9" y="293.5" width="124.8" height="8.3" fill="#c0c0c0"/>
<text x="745.95" y="299.9" font-size="6.2" fill="#404040" text-anchor="middle" textLength="3.2" lengthAdjust="spacingAndGlyphs">2</text>
<text x="757.2" y="299.9" font-size="6.2" fill="#404040" text-anchor="middle" textLength="6.5" lengthAdjust="spacingAndGlyphs">P2</text>
<text x="777.5" y="299.9" font-size="6.2" fill="#404040" text-anchor="middle" textLength="7.6" lengthAdjust="spacingAndGlyphs">W2</text>
<rect x="793.1" y="294.9" width="13" height="5.7" fill="#ffffff"/>
<text x="821.5" y="299.9" font-size="6.2" fill="#404040" text-anchor="middle" textLength="27" lengthAdjust="spacingAndGlyphs">750.00mm</text>
<text x="850.55" y="299.9" font-size="6.2" fill="#404040" text-anchor="middle" textLength="13.6" lengthAdjust="spacingAndGlyphs">White</text>
<rect x="740.9" y="301.8" width="124.8" height="8.3" fill="#d3d3d3"/>
<text x="745.95" y="308.2" font-size="6.2" fill="#404040" text-anchor="middle" textLength="3.2" lengthAdjust="spacingAndGlyphs">3</text>
<text x="757.2" y="308.2" font-size="6.2" fill="#404040" text-anchor="middle" textLength="6.5" lengthAdjust="spacingAndGlyphs">P2</text>
<text x="777.5" y="308.2" font-size="6.2" fill="#404040" text-anchor="middle" textLength="7.6" lengthAdjust="spacingAndGlyphs">W3</text>
<rect x="793.1" y="303.2" width="13" height="5.7" fill="#050505"/>
<text x="821.5" y="308.2" font-size="6.2" fill="#404040" text-anchor="middle" textLength="27" lengthAdjust="spacingAndGlyphs">750.00mm</text>
<text x="850.55" y="308.2" font-size="6.2" fill="#404040" text-anchor="middle" textLength="13.6" lengthAdjust="spacingAndGlyphs">Black</text>
<line x1="740.9" y1="277.3" x2="740.9" y2="310.1" stroke="#484848" stroke-width="0.9"/>
<line x1="751" y1="277.3" x2="751" y2="310.1" stroke="#484848" stroke-width="0.9"/>
<line x1="763.4" y1="277.3" x2="763.4" y2="310.1" stroke="#484848" stroke-width="0.9"/>
<line x1="791.6" y1="277.3" x2="791.6" y2="310.1" stroke="#484848" stroke-width="0.9"/>
<line x1="807.6" y1="277.3" x2="807.6" y2="310.1" stroke="#484848" stroke-width="0.9"/>
<line x1="835.4" y1="277.3" x2="835.4" y2="310.1" stroke="#484848" stroke-width="0.9"/>
<line x1="865.7" y1="277.3" x2="865.7" y2="310.1" stroke="#484848" stroke-width="0.9"/>
<line x1="740.9" y1="277.3" x2="865.7" y2="277.3" stroke="#7a7a7a" stroke-width="0.7"/>
<line x1="740.9" y1="285.2" x2="865.7" y2="285.2" stroke="#5a5a5a" stroke-width="0.8"/>
<line x1="740.9" y1="293.5" x2="865.7" y2="293.5" stroke="#5a5a5a" stroke-width="0.8"/>
<line x1="740.9" y1="301.8" x2="865.7" y2="301.8" stroke="#5a5a5a" stroke-width="0.8"/>
<line x1="740.9" y1="310.1" x2="865.7" y2="310.1" stroke="#5a5a5a" stroke-width="0.8"/>
<text x="763.6" y="378.4" font-size="5.6" fill="#3c3c3c" textLength="52" lengthAdjust="spacingAndGlyphs">Connection Table P3</text>
<rect x="763.4" y="380.35" width="126.3" height="7.9" fill="#b3b3b3"/>
<text x="768.5" y="386.55" font-size="6" fill="#3c3c3c" text-anchor="middle" textLength="8.6" lengthAdjust="spacingAndGlyphs">Pin</text>
<text x="779.75" y="386.55" font-size="6" fill="#3c3c3c" text-anchor="middle" textLength="10.2" lengthAdjust="spacingAndGlyphs">Part</text>
<text x="800.35" y="386.55" font-size="6" fill="#3c3c3c" text-anchor="middle" textLength="27.5" lengthAdjust="spacingAndGlyphs">Designator</text>
<text x="823.1" y="386.55" font-size="6" fill="#3c3c3c" text-anchor="middle" textLength="14" lengthAdjust="spacingAndGlyphs">Color</text>
<text x="845.55" y="386.55" font-size="6" fill="#3c3c3c" text-anchor="middle" textLength="18.5" lengthAdjust="spacingAndGlyphs">Length</text>
<text x="874.7" y="386.55" font-size="6" fill="#3c3c3c" text-anchor="middle" textLength="28.5" lengthAdjust="spacingAndGlyphs">ColorName</text>
<rect x="763.4" y="388.25" width="126.3" height="8.3" fill="#d3d3d3"/>
<text x="768.5" y="394.65" font-size="6.2" fill="#404040" text-anchor="middle" textLength="3.2" lengthAdjust="spacingAndGlyphs">1</text>
<text x="779.75" y="394.65" font-size="6.2" fill="#404040" text-anchor="middle" textLength="6.5" lengthAdjust="spacingAndGlyphs">P3</text>
<text x="800.35" y="394.65" font-size="6.2" fill="#404040" text-anchor="middle" textLength="7.6" lengthAdjust="spacingAndGlyphs">W5</text>
<rect x="816.3" y="389.65" width="13.6" height="5.7" fill="#8a0a8e"/>
<text x="845.55" y="394.65" font-size="6.2" fill="#404040" text-anchor="middle" textLength="27" lengthAdjust="spacingAndGlyphs">175.00mm</text>
<text x="874.7" y="394.65" font-size="6.2" fill="#404040" text-anchor="middle" textLength="16.32" lengthAdjust="spacingAndGlyphs">Purple</text>
<rect x="763.4" y="396.55" width="126.3" height="8.3" fill="#c0c0c0"/>
<text x="768.5" y="402.95" font-size="6.2" fill="#404040" text-anchor="middle" textLength="3.2" lengthAdjust="spacingAndGlyphs">2</text>
<text x="779.75" y="402.95" font-size="6.2" fill="#404040" text-anchor="middle" textLength="6.5" lengthAdjust="spacingAndGlyphs">P3</text>
<text x="800.35" y="402.95" font-size="6.2" fill="#404040" text-anchor="middle" textLength="11.4" lengthAdjust="spacingAndGlyphs">W11</text>
<rect x="816.3" y="397.95" width="13.6" height="5.7" fill="#1010f0"/>
<text x="845.55" y="402.95" font-size="6.2" fill="#404040" text-anchor="middle" textLength="27" lengthAdjust="spacingAndGlyphs">510.00mm</text>
<text x="874.7" y="402.95" font-size="6.2" fill="#404040" text-anchor="middle" textLength="10.88" lengthAdjust="spacingAndGlyphs">Blue</text>
<rect x="763.4" y="404.85" width="126.3" height="8.3" fill="#d3d3d3"/>
<text x="768.5" y="411.25" font-size="6.2" fill="#404040" text-anchor="middle" textLength="3.2" lengthAdjust="spacingAndGlyphs">2</text>
<text x="779.75" y="411.25" font-size="6.2" fill="#404040" text-anchor="middle" textLength="6.5" lengthAdjust="spacingAndGlyphs">P3</text>
<text x="800.35" y="411.25" font-size="6.2" fill="#404040" text-anchor="middle" textLength="11.4" lengthAdjust="spacingAndGlyphs">W12</text>
<rect x="816.3" y="406.25" width="13.6" height="5.7" fill="#1010f0"/>
<text x="845.55" y="411.25" font-size="6.2" fill="#404040" text-anchor="middle" textLength="27" lengthAdjust="spacingAndGlyphs">225.00mm</text>
<text x="874.7" y="411.25" font-size="6.2" fill="#404040" text-anchor="middle" textLength="10.88" lengthAdjust="spacingAndGlyphs">Blue</text>
<rect x="763.4" y="413.15" width="126.3" height="8.3" fill="#c0c0c0"/>
<text x="768.5" y="419.55" font-size="6.2" fill="#404040" text-anchor="middle" textLength="3.2" lengthAdjust="spacingAndGlyphs">3</text>
<text x="779.75" y="419.55" font-size="6.2" fill="#404040" text-anchor="middle" textLength="6.5" lengthAdjust="spacingAndGlyphs">P3</text>
<text x="800.35" y="419.55" font-size="6.2" fill="#404040" text-anchor="middle" textLength="11.4" lengthAdjust="spacingAndGlyphs">W13</text>
<rect x="816.3" y="414.55" width="13.6" height="5.7" fill="#050505"/>
<text x="845.55" y="419.55" font-size="6.2" fill="#404040" text-anchor="middle" textLength="27" lengthAdjust="spacingAndGlyphs">510.00mm</text>
<text x="874.7" y="419.55" font-size="6.2" fill="#404040" text-anchor="middle" textLength="13.6" lengthAdjust="spacingAndGlyphs">Black</text>
<rect x="763.4" y="421.45" width="126.3" height="8.3" fill="#d3d3d3"/>
<text x="768.5" y="427.85" font-size="6.2" fill="#404040" text-anchor="middle" textLength="3.2" lengthAdjust="spacingAndGlyphs">3</text>
<text x="779.75" y="427.85" font-size="6.2" fill="#404040" text-anchor="middle" textLength="6.5" lengthAdjust="spacingAndGlyphs">P3</text>
<text x="800.35" y="427.85" font-size="6.2" fill="#404040" text-anchor="middle" textLength="11.4" lengthAdjust="spacingAndGlyphs">W14</text>
<rect x="816.3" y="422.85" width="13.6" height="5.7" fill="#050505"/>
<text x="845.55" y="427.85" font-size="6.2" fill="#404040" text-anchor="middle" textLength="27" lengthAdjust="spacingAndGlyphs">225.00mm</text>
<text x="874.7" y="427.85" font-size="6.2" fill="#404040" text-anchor="middle" textLength="13.6" lengthAdjust="spacingAndGlyphs">Black</text>
<line x1="763.4" y1="380.35" x2="763.4" y2="429.75" stroke="#484848" stroke-width="0.9"/>
<line x1="773.6" y1="380.35" x2="773.6" y2="429.75" stroke="#484848" stroke-width="0.9"/>
<line x1="785.9" y1="380.35" x2="785.9" y2="429.75" stroke="#484848" stroke-width="0.9"/>
<line x1="814.8" y1="380.35" x2="814.8" y2="429.75" stroke="#484848" stroke-width="0.9"/>
<line x1="831.4" y1="380.35" x2="831.4" y2="429.75" stroke="#484848" stroke-width="0.9"/>
<line x1="859.7" y1="380.35" x2="859.7" y2="429.75" stroke="#484848" stroke-width="0.9"/>
<line x1="889.7" y1="380.35" x2="889.7" y2="429.75" stroke="#484848" stroke-width="0.9"/>
<line x1="763.4" y1="380.35" x2="889.7" y2="380.35" stroke="#7a7a7a" stroke-width="0.7"/>
<line x1="763.4" y1="388.25" x2="889.7" y2="388.25" stroke="#5a5a5a" stroke-width="0.8"/>
<line x1="763.4" y1="396.55" x2="889.7" y2="396.55" stroke="#5a5a5a" stroke-width="0.8"/>
<line x1="763.4" y1="404.85" x2="889.7" y2="404.85" stroke="#5a5a5a" stroke-width="0.8"/>
<line x1="763.4" y1="413.15" x2="889.7" y2="413.15" stroke="#5a5a5a" stroke-width="0.8"/>
<line x1="763.4" y1="421.45" x2="889.7" y2="421.45" stroke="#5a5a5a" stroke-width="0.8"/>
<line x1="763.4" y1="429.75" x2="889.7" y2="429.75" stroke="#5a5a5a" stroke-width="0.8"/>
<text x="703.6" y="476.3" font-size="5.6" fill="#3c3c3c" textLength="52" lengthAdjust="spacingAndGlyphs">Connection Table P4</text>
<rect x="703.4" y="478.2" width="126.3" height="7.9" fill="#b3b3b3"/>
<text x="708.5" y="484.4" font-size="6" fill="#3c3c3c" text-anchor="middle" textLength="8.6" lengthAdjust="spacingAndGlyphs">Pin</text>
<text x="719.75" y="484.4" font-size="6" fill="#3c3c3c" text-anchor="middle" textLength="10.2" lengthAdjust="spacingAndGlyphs">Part</text>
<text x="740.35" y="484.4" font-size="6" fill="#3c3c3c" text-anchor="middle" textLength="27.5" lengthAdjust="spacingAndGlyphs">Designator</text>
<text x="763.1" y="484.4" font-size="6" fill="#3c3c3c" text-anchor="middle" textLength="14" lengthAdjust="spacingAndGlyphs">Color</text>
<text x="785.55" y="484.4" font-size="6" fill="#3c3c3c" text-anchor="middle" textLength="18.5" lengthAdjust="spacingAndGlyphs">Length</text>
<text x="814.7" y="484.4" font-size="6" fill="#3c3c3c" text-anchor="middle" textLength="28.5" lengthAdjust="spacingAndGlyphs">ColorName</text>
<rect x="703.4" y="486.1" width="126.3" height="8.3" fill="#d3d3d3"/>
<text x="708.5" y="492.5" font-size="6.2" fill="#404040" text-anchor="middle" textLength="3.2" lengthAdjust="spacingAndGlyphs">1</text>
<text x="719.75" y="492.5" font-size="6.2" fill="#404040" text-anchor="middle" textLength="6.5" lengthAdjust="spacingAndGlyphs">P4</text>
<text x="740.35" y="492.5" font-size="6.2" fill="#404040" text-anchor="middle" textLength="7.6" lengthAdjust="spacingAndGlyphs">W6</text>
<rect x="756.3" y="487.5" width="13.6" height="5.7" fill="#8a0a8e"/>
<text x="785.55" y="492.5" font-size="6.2" fill="#404040" text-anchor="middle" textLength="27" lengthAdjust="spacingAndGlyphs">150.00mm</text>
<text x="814.7" y="492.5" font-size="6.2" fill="#404040" text-anchor="middle" textLength="16.32" lengthAdjust="spacingAndGlyphs">Purple</text>
<rect x="703.4" y="494.4" width="126.3" height="8.3" fill="#c0c0c0"/>
<text x="708.5" y="500.8" font-size="6.2" fill="#404040" text-anchor="middle" textLength="3.2" lengthAdjust="spacingAndGlyphs">2</text>
<text x="719.75" y="500.8" font-size="6.2" fill="#404040" text-anchor="middle" textLength="6.5" lengthAdjust="spacingAndGlyphs">P4</text>
<text x="740.35" y="500.8" font-size="6.2" fill="#404040" text-anchor="middle" textLength="11.4" lengthAdjust="spacingAndGlyphs">W12</text>
<rect x="756.3" y="495.8" width="13.6" height="5.7" fill="#1010f0"/>
<text x="785.55" y="500.8" font-size="6.2" fill="#404040" text-anchor="middle" textLength="27" lengthAdjust="spacingAndGlyphs">225.00mm</text>
<text x="814.7" y="500.8" font-size="6.2" fill="#404040" text-anchor="middle" textLength="10.88" lengthAdjust="spacingAndGlyphs">Blue</text>
<rect x="703.4" y="502.7" width="126.3" height="8.3" fill="#d3d3d3"/>
<text x="708.5" y="509.1" font-size="6.2" fill="#404040" text-anchor="middle" textLength="3.2" lengthAdjust="spacingAndGlyphs">3</text>
<text x="719.75" y="509.1" font-size="6.2" fill="#404040" text-anchor="middle" textLength="6.5" lengthAdjust="spacingAndGlyphs">P4</text>
<text x="740.35" y="509.1" font-size="6.2" fill="#404040" text-anchor="middle" textLength="11.4" lengthAdjust="spacingAndGlyphs">W14</text>
<rect x="756.3" y="504.1" width="13.6" height="5.7" fill="#050505"/>
<text x="785.55" y="509.1" font-size="6.2" fill="#404040" text-anchor="middle" textLength="27" lengthAdjust="spacingAndGlyphs">225.00mm</text>
<text x="814.7" y="509.1" font-size="6.2" fill="#404040" text-anchor="middle" textLength="13.6" lengthAdjust="spacingAndGlyphs">Black</text>
<line x1="703.4" y1="478.2" x2="703.4" y2="511" stroke="#484848" stroke-width="0.9"/>
<line x1="713.6" y1="478.2" x2="713.6" y2="511" stroke="#484848" stroke-width="0.9"/>
<line x1="725.9" y1="478.2" x2="725.9" y2="511" stroke="#484848" stroke-width="0.9"/>
<line x1="754.8" y1="478.2" x2="754.8" y2="511" stroke="#484848" stroke-width="0.9"/>
<line x1="771.4" y1="478.2" x2="771.4" y2="511" stroke="#484848" stroke-width="0.9"/>
<line x1="799.7" y1="478.2" x2="799.7" y2="511" stroke="#484848" stroke-width="0.9"/>
<line x1="829.7" y1="478.2" x2="829.7" y2="511" stroke="#484848" stroke-width="0.9"/>
<line x1="703.4" y1="478.2" x2="829.7" y2="478.2" stroke="#7a7a7a" stroke-width="0.7"/>
<line x1="703.4" y1="486.1" x2="829.7" y2="486.1" stroke="#5a5a5a" stroke-width="0.8"/>
<line x1="703.4" y1="494.4" x2="829.7" y2="494.4" stroke="#5a5a5a" stroke-width="0.8"/>
<line x1="703.4" y1="502.7" x2="829.7" y2="502.7" stroke="#5a5a5a" stroke-width="0.8"/>
<line x1="703.4" y1="511" x2="829.7" y2="511" stroke="#5a5a5a" stroke-width="0.8"/>
<text x="491.6" y="596.4" font-size="5.6" fill="#3c3c3c" textLength="52" lengthAdjust="spacingAndGlyphs">Connection Table P5</text>
<rect x="491.4" y="598.35" width="127.4" height="7.9" fill="#b3b3b3"/>
<text x="496.5" y="604.55" font-size="6" fill="#3c3c3c" text-anchor="middle" textLength="8.6" lengthAdjust="spacingAndGlyphs">Pin</text>
<text x="507.75" y="604.55" font-size="6" fill="#3c3c3c" text-anchor="middle" textLength="10.2" lengthAdjust="spacingAndGlyphs">Part</text>
<text x="528.35" y="604.55" font-size="6" fill="#3c3c3c" text-anchor="middle" textLength="27.5" lengthAdjust="spacingAndGlyphs">Designator</text>
<text x="551.55" y="604.55" font-size="6" fill="#3c3c3c" text-anchor="middle" textLength="14" lengthAdjust="spacingAndGlyphs">Color</text>
<text x="574.3" y="604.55" font-size="6" fill="#3c3c3c" text-anchor="middle" textLength="18.5" lengthAdjust="spacingAndGlyphs">Length</text>
<text x="603.55" y="604.55" font-size="6" fill="#3c3c3c" text-anchor="middle" textLength="28.5" lengthAdjust="spacingAndGlyphs">ColorName</text>
<rect x="491.4" y="606.25" width="127.4" height="8.3" fill="#d3d3d3"/>
<text x="496.5" y="612.65" font-size="6.2" fill="#404040" text-anchor="middle" textLength="3.2" lengthAdjust="spacingAndGlyphs">1</text>
<text x="507.75" y="612.65" font-size="6.2" fill="#404040" text-anchor="middle" textLength="6.5" lengthAdjust="spacingAndGlyphs">P5</text>
<text x="528.35" y="612.65" font-size="6.2" fill="#404040" text-anchor="middle" textLength="7.6" lengthAdjust="spacingAndGlyphs">W7</text>
<rect x="544.3" y="607.65" width="14.5" height="5.7" fill="#8a0a8e"/>
<text x="574.3" y="612.65" font-size="6.2" fill="#404040" text-anchor="middle" textLength="27" lengthAdjust="spacingAndGlyphs">335.00mm</text>
<text x="603.55" y="612.65" font-size="6.2" fill="#404040" text-anchor="middle" textLength="16.32" lengthAdjust="spacingAndGlyphs">Purple</text>
<rect x="491.4" y="614.55" width="127.4" height="8.3" fill="#c0c0c0"/>
<text x="496.5" y="620.95" font-size="6.2" fill="#404040" text-anchor="middle" textLength="3.2" lengthAdjust="spacingAndGlyphs">2</text>
<text x="507.75" y="620.95" font-size="6.2" fill="#404040" text-anchor="middle" textLength="6.5" lengthAdjust="spacingAndGlyphs">P5</text>
<text x="528.35" y="620.95" font-size="6.2" fill="#404040" text-anchor="middle" textLength="7.6" lengthAdjust="spacingAndGlyphs">W8</text>
<rect x="544.3" y="615.95" width="14.5" height="5.7" fill="#f01414"/>
<text x="574.3" y="620.95" font-size="6.2" fill="#404040" text-anchor="middle" textLength="27" lengthAdjust="spacingAndGlyphs">985.00mm</text>
<text x="603.55" y="620.95" font-size="6.2" fill="#404040" text-anchor="middle" textLength="8.16" lengthAdjust="spacingAndGlyphs">Red</text>
<rect x="491.4" y="622.85" width="127.4" height="8.3" fill="#d3d3d3"/>
<text x="496.5" y="629.25" font-size="6.2" fill="#404040" text-anchor="middle" textLength="3.2" lengthAdjust="spacingAndGlyphs">3</text>
<text x="507.75" y="629.25" font-size="6.2" fill="#404040" text-anchor="middle" textLength="6.5" lengthAdjust="spacingAndGlyphs">P5</text>
<text x="528.35" y="629.25" font-size="6.2" fill="#404040" text-anchor="middle" textLength="7.6" lengthAdjust="spacingAndGlyphs">W9</text>
<rect x="544.3" y="624.25" width="14.5" height="5.7" fill="#f8f820"/>
<text x="574.3" y="629.25" font-size="6.2" fill="#404040" text-anchor="middle" textLength="27" lengthAdjust="spacingAndGlyphs">985.00mm</text>
<text x="603.55" y="629.25" font-size="6.2" fill="#404040" text-anchor="middle" textLength="16.32" lengthAdjust="spacingAndGlyphs">Yellow</text>
<rect x="491.4" y="631.15" width="127.4" height="8.3" fill="#c0c0c0"/>
<text x="496.5" y="637.55" font-size="6.2" fill="#404040" text-anchor="middle" textLength="3.2" lengthAdjust="spacingAndGlyphs">4</text>
<text x="507.75" y="637.55" font-size="6.2" fill="#404040" text-anchor="middle" textLength="6.5" lengthAdjust="spacingAndGlyphs">P5</text>
<text x="528.35" y="637.55" font-size="6.2" fill="#404040" text-anchor="middle" textLength="11.4" lengthAdjust="spacingAndGlyphs">W11</text>
<rect x="544.3" y="632.55" width="14.5" height="5.7" fill="#1010f0"/>
<text x="574.3" y="637.55" font-size="6.2" fill="#404040" text-anchor="middle" textLength="27" lengthAdjust="spacingAndGlyphs">510.00mm</text>
<text x="603.55" y="637.55" font-size="6.2" fill="#404040" text-anchor="middle" textLength="10.88" lengthAdjust="spacingAndGlyphs">Blue</text>
<rect x="491.4" y="639.45" width="127.4" height="8.3" fill="#d3d3d3"/>
<text x="496.5" y="645.85" font-size="6.2" fill="#404040" text-anchor="middle" textLength="3.2" lengthAdjust="spacingAndGlyphs">5</text>
<text x="507.75" y="645.85" font-size="6.2" fill="#404040" text-anchor="middle" textLength="6.5" lengthAdjust="spacingAndGlyphs">P5</text>
<text x="528.35" y="645.85" font-size="6.2" fill="#404040" text-anchor="middle" textLength="11.4" lengthAdjust="spacingAndGlyphs">W13</text>
<rect x="544.3" y="640.85" width="14.5" height="5.7" fill="#050505"/>
<text x="574.3" y="645.85" font-size="6.2" fill="#404040" text-anchor="middle" textLength="27" lengthAdjust="spacingAndGlyphs">510.00mm</text>
<text x="603.55" y="645.85" font-size="6.2" fill="#404040" text-anchor="middle" textLength="13.6" lengthAdjust="spacingAndGlyphs">Black</text>
<line x1="491.4" y1="598.35" x2="491.4" y2="647.75" stroke="#484848" stroke-width="0.9"/>
<line x1="501.6" y1="598.35" x2="501.6" y2="647.75" stroke="#484848" stroke-width="0.9"/>
<line x1="513.9" y1="598.35" x2="513.9" y2="647.75" stroke="#484848" stroke-width="0.9"/>
<line x1="542.8" y1="598.35" x2="542.8" y2="647.75" stroke="#484848" stroke-width="0.9"/>
<line x1="560.3" y1="598.35" x2="560.3" y2="647.75" stroke="#484848" stroke-width="0.9"/>
<line x1="588.3" y1="598.35" x2="588.3" y2="647.75" stroke="#484848" stroke-width="0.9"/>
<line x1="618.8" y1="598.35" x2="618.8" y2="647.75" stroke="#484848" stroke-width="0.9"/>
<line x1="491.4" y1="598.35" x2="618.8" y2="598.35" stroke="#7a7a7a" stroke-width="0.7"/>
<line x1="491.4" y1="606.25" x2="618.8" y2="606.25" stroke="#5a5a5a" stroke-width="0.8"/>
<line x1="491.4" y1="614.55" x2="618.8" y2="614.55" stroke="#5a5a5a" stroke-width="0.8"/>
<line x1="491.4" y1="622.85" x2="618.8" y2="622.85" stroke="#5a5a5a" stroke-width="0.8"/>
<line x1="491.4" y1="631.15" x2="618.8" y2="631.15" stroke="#5a5a5a" stroke-width="0.8"/>
<line x1="491.4" y1="639.45" x2="618.8" y2="639.45" stroke="#5a5a5a" stroke-width="0.8"/>
<line x1="491.4" y1="647.75" x2="618.8" y2="647.75" stroke="#5a5a5a" stroke-width="0.8"/>
<rect x="625.3" y="621.2" width="24.4" height="38.3" fill="none" stroke="#727272" stroke-width="0.8"/>
<text x="628.3" y="623.6" font-size="2.6" fill="#111" font-weight="bold" textLength="19" lengthAdjust="spacingAndGlyphs">THIRD ANGLE PROJECTION</text>
<path d="M632.3 628.5 h11.6 l-2.6 10 h-6.4 z" fill="none" stroke="#555" stroke-width="0.7"/>
<circle cx="638" cy="647.3" r="5.6" fill="none" stroke="#555" stroke-width="0.7"/>
<circle cx="638" cy="647.3" r="2.9" fill="none" stroke="#555" stroke-width="0.7"/>
<line x1="638" y1="626" x2="638" y2="656" stroke="#888" stroke-width="0.5"/>
<line x1="631" y1="647.3" x2="645" y2="647.3" stroke="#888" stroke-width="0.5"/>
<rect x="649.7" y="621.2" width="44.9" height="38.3" fill="none" stroke="#727272" stroke-width="0.8"/>
<line x1="649.7" y1="627" x2="694.6" y2="627" stroke="#727272" stroke-width="0.7"/>
<line x1="649.7" y1="633.4" x2="694.6" y2="633.4" stroke="#727272" stroke-width="0.7"/>
<line x1="649.7" y1="639.5" x2="694.6" y2="639.5" stroke="#727272" stroke-width="0.7"/>
<line x1="649.7" y1="645.5" x2="694.6" y2="645.5" stroke="#727272" stroke-width="0.7"/>
<line x1="649.7" y1="651.6" x2="694.6" y2="651.6" stroke="#727272" stroke-width="0.7"/>
<line x1="649.7" y1="655.5" x2="694.6" y2="655.5" stroke="#777" stroke-width="0.6"/>
<line x1="672.8" y1="621.2" x2="672.8" y2="651.6" stroke="#727272" stroke-width="0.7"/>
<text x="656" y="654.4" font-size="2.6" fill="#111" font-weight="bold" textLength="10" lengthAdjust="spacingAndGlyphs">APPROVALS</text>
<text x="677.5" y="654.4" font-size="2.6" fill="#111" font-weight="bold" textLength="7" lengthAdjust="spacingAndGlyphs">DATE</text>
<text x="664.5" y="658.6" font-size="2.6" fill="#111" font-weight="bold" textLength="12" lengthAdjust="spacingAndGlyphs">MATERIAL</text>
<rect x="694.4" y="602.8" width="57" height="56.7" fill="none" stroke="#727272" stroke-width="0.8"/>
<line x1="694.4" y1="613.5" x2="751.4" y2="613.5" stroke="#727272" stroke-width="0.7"/>
<line x1="694.4" y1="619.6" x2="751.4" y2="619.6" stroke="#727272" stroke-width="0.7"/>
<line x1="694.4" y1="625.4" x2="751.4" y2="625.4" stroke="#727272" stroke-width="0.7"/>
<line x1="694.4" y1="630.2" x2="751.4" y2="630.2" stroke="#727272" stroke-width="0.7"/>
<line x1="694.4" y1="637.8" x2="751.4" y2="637.8" stroke="#727272" stroke-width="0.7"/>
<line x1="694.4" y1="645.1" x2="751.4" y2="645.1" stroke="#727272" stroke-width="0.7"/>
<line x1="694.4" y1="652.4" x2="751.4" y2="652.4" stroke="#727272" stroke-width="0.7"/>
<line x1="694.4" y1="607.6" x2="706.5" y2="607.6" stroke="#666" stroke-width="0.6"/>
<line x1="733.2" y1="608.5" x2="751.4" y2="608.5" stroke="#666" stroke-width="0.6"/>
<line x1="733.2" y1="602.8" x2="733.2" y2="625.4" stroke="#727272" stroke-width="0.7"/>
<line x1="706.5" y1="602.8" x2="706.5" y2="625.4" stroke="#777" stroke-width="0.6"/>
<text x="695.3" y="601.7" font-size="2.6" fill="#111" font-weight="bold" textLength="9.5" lengthAdjust="spacingAndGlyphs">DWG. NO.</text>
<text x="708" y="601.7" font-size="2.6" fill="#111" font-weight="bold" textLength="24" lengthAdjust="spacingAndGlyphs">UNLESS OTHERWISE SPECIFIED</text>
<text x="707.3" y="606" font-size="2.6" fill="#111" font-weight="bold" textLength="14" lengthAdjust="spacingAndGlyphs">DIMENSIONS ARE IN</text>
<text x="739" y="606" font-size="2.6" fill="#111" font-weight="bold" textLength="6" lengthAdjust="spacingAndGlyphs">ANGLE</text>
<text x="711.5" y="611.9" font-size="2.8" fill="#111" font-weight="bold" textLength="18" lengthAdjust="spacingAndGlyphs">=TOLERANCE_XX</text>
<text x="711.5" y="617.9" font-size="2.8" fill="#111" font-weight="bold" textLength="18" lengthAdjust="spacingAndGlyphs">=TOLERANCE_XX</text>
<text x="711.5" y="624" font-size="2.8" fill="#111" font-weight="bold" textLength="18" lengthAdjust="spacingAndGlyphs">=TOLERANCE_XX</text>
<text x="695.3" y="609.8" font-size="2.5" fill="#111" font-weight="bold" textLength="10.5" lengthAdjust="spacingAndGlyphs">TOLERANCE</text>
<text x="695.3" y="615.9" font-size="2.5" fill="#111" font-weight="bold" textLength="10.5" lengthAdjust="spacingAndGlyphs">TOLERANCE</text>
<text x="695.3" y="621.9" font-size="2.5" fill="#111" font-weight="bold" textLength="10.5" lengthAdjust="spacingAndGlyphs">TOLERANCE</text>
<text x="734" y="611.8" font-size="2.5" fill="#111" font-weight="bold" textLength="16" lengthAdjust="spacingAndGlyphs">=ANGLE_TOLER</text>
<text x="734" y="616.8" font-size="2.5" fill="#111" font-weight="bold" textLength="16" lengthAdjust="spacingAndGlyphs">=ANGLE_TOLER</text>
<text x="734" y="622.8" font-size="2.5" fill="#111" font-weight="bold" textLength="16" lengthAdjust="spacingAndGlyphs">=ANGLE_TOLER</text>
<text x="710" y="628.9" font-size="2.7" fill="#111" font-weight="bold" textLength="26" lengthAdjust="spacingAndGlyphs">DO NOT SCALE DRAWING</text>
<text x="717.2" y="635" font-size="4.5" fill="#222" font-weight="bold" textLength="27.7" lengthAdjust="spacingAndGlyphs">=DOC_NO_REV</text>
<text x="712.2" y="643" font-size="4.5" fill="#222" font-weight="bold" textLength="37.2" lengthAdjust="spacingAndGlyphs">=DOC_NO_PAR_DWG</text>
<text x="712" y="650.4" font-size="4.5" fill="#222" font-weight="bold" textLength="37.6" lengthAdjust="spacingAndGlyphs">=DOC_NO_SCH_DWG</text>
<text x="717" y="658.3" font-size="4.5" fill="#222" font-weight="bold" textLength="27.4" lengthAdjust="spacingAndGlyphs">=PCB_DWG_NO</text>
<text x="695.5" y="632.3" font-size="2.6" fill="#111" font-weight="bold" textLength="11" lengthAdjust="spacingAndGlyphs">REV</text>
<text x="695.5" y="640.2" font-size="2.6" fill="#111" font-weight="bold" textLength="11" lengthAdjust="spacingAndGlyphs">PAR DWG</text>
<text x="695.5" y="647.3" font-size="2.6" fill="#111" font-weight="bold" textLength="11" lengthAdjust="spacingAndGlyphs">SCH DWG</text>
<text x="695.5" y="655.3" font-size="2.6" fill="#111" font-weight="bold" textLength="11" lengthAdjust="spacingAndGlyphs">PCB DWG</text>
<rect x="751.6" y="603.4" width="140.9" height="56.1" fill="none" stroke="#727272" stroke-width="0.8"/>
<line x1="751.6" y1="621.6" x2="892.5" y2="621.6" stroke="#727272" stroke-width="0.7"/>
<line x1="751.6" y1="627.4" x2="892.5" y2="627.4" stroke="#727272" stroke-width="0.7"/>
<line x1="751.6" y1="640.4" x2="892.5" y2="640.4" stroke="#727272" stroke-width="0.7"/>
<line x1="751.6" y1="654.3" x2="892.5" y2="654.3" stroke="#727272" stroke-width="0.7"/>
<line x1="818.4" y1="621.6" x2="818.4" y2="627.4" stroke="#727272" stroke-width="0.7"/>
<line x1="763.3" y1="640.4" x2="763.3" y2="654.3" stroke="#727272" stroke-width="0.7"/>
<line x1="803.6" y1="640.4" x2="803.6" y2="654.3" stroke="#727272" stroke-width="0.7"/>
<line x1="882" y1="640.4" x2="882" y2="654.3" stroke="#727272" stroke-width="0.7"/>
<line x1="773.7" y1="654.3" x2="773.7" y2="659.5" stroke="#727272" stroke-width="0.7"/>
<line x1="859" y1="654.3" x2="859" y2="659.5" stroke="#727272" stroke-width="0.7"/>
<line x1="879" y1="654.3" x2="879" y2="659.5" stroke="#727272" stroke-width="0.7"/>
<text x="759" y="618.5" font-size="19" fill="#0a0a0a" font-weight="bold" font-style="italic" textLength="65.5" lengthAdjust="spacingAndGlyphs" stroke="#0a0a0a" stroke-width="0.9" stroke-linejoin="round">Altium</text>
<text x="824.8" y="619.3" font-size="4" fill="#111" font-weight="bold">.</text>
<text x="834" y="605.6" font-size="3.2" fill="#111" font-weight="bold" textLength="14.5" lengthAdjust="spacingAndGlyphs">=Address</text>
<text x="834" y="609.6" font-size="3.2" fill="#111" font-weight="bold" textLength="14.5" lengthAdjust="spacingAndGlyphs">=Address</text>
<text x="834" y="613.6" font-size="3.2" fill="#111" font-weight="bold" textLength="14.5" lengthAdjust="spacingAndGlyphs">=Address</text>
<text x="834" y="617.6" font-size="3.2" fill="#111" font-weight="bold" textLength="14.5" lengthAdjust="spacingAndGlyphs">=Address</text>
<text x="752.5" y="623.5" font-size="2.4" fill="#111" font-weight="bold" textLength="9" lengthAdjust="spacingAndGlyphs">ITEM NO.</text>
<text x="819" y="623.2" font-size="2.4" fill="#111" font-weight="bold" textLength="18" lengthAdjust="spacingAndGlyphs">ITEM REVISION</text>
<text x="768" y="626.6" font-size="3.4" fill="#111" font-weight="bold" textLength="11" lengthAdjust="spacingAndGlyphs">=Item</text>
<text x="848" y="626.6" font-size="3.4" fill="#111" font-weight="bold" textLength="25" lengthAdjust="spacingAndGlyphs">=ItemRevision</text>
<text x="752.5" y="629.2" font-size="2.2" fill="#111" font-weight="bold" textLength="4" lengthAdjust="spacingAndGlyphs">TITLE</text>
<text x="808" y="632.6" font-size="4" fill="#222" font-weight="bold" textLength="28" lengthAdjust="spacingAndGlyphs">=PCB_TITLE_1</text>
<text x="808" y="638.6" font-size="4" fill="#222" font-weight="bold" textLength="28" lengthAdjust="spacingAndGlyphs">=PCB_TITLE_2</text>
<text x="755.5" y="642.3" font-size="2.2" fill="#111" font-weight="bold" textLength="4" lengthAdjust="spacingAndGlyphs">SIZE</text>
<text x="764.3" y="642.3" font-size="2.2" fill="#111" font-weight="bold" textLength="10" lengthAdjust="spacingAndGlyphs">CAGE CODE</text>
<text x="804.6" y="642.3" font-size="2.2" fill="#111" font-weight="bold" textLength="8" lengthAdjust="spacingAndGlyphs">DWG NO.</text>
<text x="884" y="642.3" font-size="2.2" fill="#111" font-weight="bold" textLength="4" lengthAdjust="spacingAndGlyphs">REV</text>
<text x="752.6" y="652" font-size="8.6" fill="#111" textLength="10.3" lengthAdjust="spacingAndGlyphs" stroke="#111" stroke-width="0.25">A2</text>
<text x="765.8" y="651.5" font-size="4.8" fill="#222" font-weight="bold" textLength="34" lengthAdjust="spacingAndGlyphs">=CAGE_CO</text>
<text x="883.6" y="652.6" font-size="9.5" fill="#222" font-weight="bold" textLength="5.6" lengthAdjust="spacingAndGlyphs">n</text>
<text x="752.5" y="656.2" font-size="2.2" fill="#111" font-weight="bold" textLength="6" lengthAdjust="spacingAndGlyphs">SCALE</text>
<text x="775" y="656.2" font-size="2.2" fill="#111" font-weight="bold" textLength="10" lengthAdjust="spacingAndGlyphs">CAD FILE</text>
<text x="864" y="656.2" font-size="2.2" fill="#111" font-weight="bold" textLength="6" lengthAdjust="spacingAndGlyphs">SHEET</text>
<text x="876.5" y="656.2" font-size="2.2" fill="#111" font-weight="bold" textLength="3" lengthAdjust="spacingAndGlyphs">OF</text>
<text x="820" y="658.8" font-size="3" fill="#555" textLength="4" lengthAdjust="spacingAndGlyphs">A7</text>
<text x="872.5" y="658.8" font-size="3.2" fill="#444">1</text>
<text x="885.5" y="658.8" font-size="3.2" fill="#444">1</text>
<rect x="769.4" y="47.5" width="123.1" height="36" fill="none" stroke="#6e6e6e" stroke-width="0.8"/>
<line x1="769.4" y1="53.2" x2="892.5" y2="53.2" stroke="#6e6e6e" stroke-width="0.8"/>
<line x1="769.4" y1="59.4" x2="892.5" y2="59.4" stroke="#6e6e6e" stroke-width="0.8"/>
<line x1="769.4" y1="65.3" x2="892.5" y2="65.3" stroke="#6e6e6e" stroke-width="0.8"/>
<line x1="769.4" y1="71.5" x2="892.5" y2="71.5" stroke="#6e6e6e" stroke-width="0.8"/>
<line x1="769.4" y1="77.6" x2="892.5" y2="77.6" stroke="#6e6e6e" stroke-width="0.8"/>
<line x1="779.7" y1="53.2" x2="779.7" y2="83.5" stroke="#6e6e6e" stroke-width="0.8"/>
<line x1="788.5" y1="53.2" x2="788.5" y2="83.5" stroke="#6e6e6e" stroke-width="0.8"/>
<line x1="859.4" y1="53.2" x2="859.4" y2="83.5" stroke="#6e6e6e" stroke-width="0.8"/>
<line x1="874.6" y1="53.2" x2="874.6" y2="83.5" stroke="#6e6e6e" stroke-width="0.8"/>
<text x="831" y="51.6" font-size="3" fill="#777" text-anchor="middle" textLength="13" lengthAdjust="spacingAndGlyphs">REVISIONS</text>
<text x="774.5" y="57.7" font-size="2.8" fill="#888" text-anchor="middle" textLength="6" lengthAdjust="spacingAndGlyphs">ZONE</text>
<text x="784" y="57.7" font-size="2.8" fill="#888" text-anchor="middle" textLength="5" lengthAdjust="spacingAndGlyphs">REV</text>
<text x="824" y="57.7" font-size="2.8" fill="#888" text-anchor="middle" textLength="16" lengthAdjust="spacingAndGlyphs">DESCRIPTION</text>
<text x="867" y="57.7" font-size="2.8" fill="#888" text-anchor="middle" textLength="6" lengthAdjust="spacingAndGlyphs">DATE</text>
<text x="883.5" y="57.7" font-size="2.8" fill="#888" text-anchor="middle" textLength="11" lengthAdjust="spacingAndGlyphs">APPROVED</text>
<rect x="684.3" y="47.5" width="85.1" height="11.9" fill="none" stroke="#6e6e6e" stroke-width="0.7"/>
<line x1="700.5" y1="47.5" x2="700.5" y2="59.4" stroke="#6e6e6e" stroke-width="0.7"/>
<line x1="700.5" y1="53.5" x2="769.4" y2="53.5" stroke="#6e6e6e" stroke-width="0.7"/>
<line x1="709.7" y1="47.5" x2="709.7" y2="59.4" stroke="#6e6e6e" stroke-width="0.7"/>
<line x1="715.67" y1="47.5" x2="715.67" y2="59.4" stroke="#6e6e6e" stroke-width="0.7"/>
<line x1="721.64" y1="47.5" x2="721.64" y2="59.4" stroke="#6e6e6e" stroke-width="0.7"/>
<line x1="727.61" y1="47.5" x2="727.61" y2="59.4" stroke="#6e6e6e" stroke-width="0.7"/>
<line x1="733.58" y1="47.5" x2="733.58" y2="59.4" stroke="#6e6e6e" stroke-width="0.7"/>
<line x1="739.55" y1="47.5" x2="739.55" y2="59.4" stroke="#6e6e6e" stroke-width="0.7"/>
<line x1="745.52" y1="47.5" x2="745.52" y2="59.4" stroke="#6e6e6e" stroke-width="0.7"/>
<line x1="751.49" y1="47.5" x2="751.49" y2="59.4" stroke="#6e6e6e" stroke-width="0.7"/>
<line x1="757.46" y1="47.5" x2="757.46" y2="59.4" stroke="#6e6e6e" stroke-width="0.7"/>
<line x1="763.43" y1="47.5" x2="763.43" y2="59.4" stroke="#6e6e6e" stroke-width="0.7"/>
<text x="692.4" y="51.7" font-size="2.6" fill="#777" text-anchor="middle" textLength="13" lengthAdjust="spacingAndGlyphs">REV STATUS</text>
<text x="692.4" y="56.5" font-size="2.6" fill="#777" text-anchor="middle" textLength="12" lengthAdjust="spacingAndGlyphs">OF SHEETS</text>
<text x="705.1" y="51.7" font-size="2.6" fill="#777" text-anchor="middle" textLength="5" lengthAdjust="spacingAndGlyphs">REV</text>
<text x="705.1" y="57.7" font-size="2.6" fill="#777" text-anchor="middle" textLength="7" lengthAdjust="spacingAndGlyphs">SHEET</text>
<rect x="741" y="41.4" width="41.7" height="5.3" fill="#fffefc" stroke="#8a8a8a" stroke-width="0.6"/>
<line x1="776.8" y1="41.4" x2="776.8" y2="46.7" stroke="#8a8a8a" stroke-width="0.6"/>
<text x="742" y="43.2" font-size="1.8" fill="#111" font-weight="bold" textLength="5" lengthAdjust="spacingAndGlyphs">DWG NO.</text>
<text x="777.5" y="43.2" font-size="1.8" fill="#111" font-weight="bold" textLength="2.5" lengthAdjust="spacingAndGlyphs">SH</text>
<text x="742" y="46.1" font-size="3.2" fill="#111" font-weight="bold" textLength="33" lengthAdjust="spacingAndGlyphs">=DOC_NO_PCB_DWG</text>
<text x="777.6" y="46.1" font-size="3" fill="#111" font-weight="bold" textLength="4" lengthAdjust="spacingAndGlyphs">=S</text>
<rect x="408" y="0" width="12" height="40" fill="url(#shd)" opacity="0.5"/>
<rect x="408" y="40" width="16" height="627.2" fill="url(#shd)" opacity="0.5"/>
<rect x="408" y="667.2" width="16" height="52.8" fill="url(#shd)"/>
<rect x="0" y="0" width="408" height="720" fill="#404040"/>
<rect x="0" y="0" width="408" height="8" fill="#4b4949"/>
<rect x="0" y="0" width="408" height="1.3" fill="#676767"/>
<rect x="0" y="8" width="408" height="23" fill="#5e82a9"/>
<rect x="0" y="31" width="6.5" height="689" fill="#3c3c3c"/>
<rect x="0" y="0" width="1.3" height="720" fill="#595959"/>
<rect x="400" y="31" width="8" height="689" fill="#434343"/>
<rect x="407" y="8" width="1" height="712" fill="#37393c"/>
<text x="6" y="22.5" font-size="12" fill="#ffffff" font-weight="bold" textLength="58" lengthAdjust="spacingAndGlyphs">Properties</text>
<polygon points="377,17 384,17 380.5,22" fill="#ffffff"/>
<path d="M393.5 16.5 L400 23 M400 16.5 L393.5 23" stroke="#ffffff" stroke-width="1.8" fill="none"/>
<text x="9.5" y="53.7" font-size="12" fill="#dedede" textLength="97" lengthAdjust="spacingAndGlyphs">Document Options</text>
<rect x="352" y="39.5" width="46.5" height="22" fill="#545454" stroke="#242424" stroke-width="1" rx="4"/>
<path d="M376 40 h18.5 a3.5 3.5 0 0 1 3.5 3.5 v14 a3.5 3.5 0 0 1 -3.5 3.5 h-18.5 z" fill="#5c86b4"/>
<line x1="375.5" y1="40" x2="375.5" y2="61" stroke="#1f1f1f" stroke-width="1"/>
<path d="M358.6 51 v-5.6 h5.9 v1.6" stroke="#ffffff" stroke-width="1.3" fill="none"/>
<path d="M364 54.2 h-3 v-6.4 h6.6 v2.6" stroke="#ffffff" stroke-width="1.3" fill="none"/>
<path d="M363.8 50.3 l6.2 2.3 l-2.3 0.9 l2 2.2 l-1 0.9 l-2 -2.2 l-1 2.2 z" fill="#ffffff"/>
<path d="M385 51.4 h-3.2 v-6 h6 v3" stroke="#ffffff" stroke-width="1.3" fill="none"/>
<path d="M386.4 49.2 l6.4 2.4 l-2.4 0.9 l2 2.3 l-1 0.9 l-2 -2.3 l-1 2.3 z" fill="#ffffff"/>
<rect x="9.5" y="71.5" width="388.5" height="18.7" fill="#303030" stroke="#2b2b2b" stroke-width="1" rx="3"/>
<circle cx="21.6" cy="79.6" r="3.3" fill="none" stroke="#9a9a9a" stroke-width="1.5"/>
<line x1="24" y1="82.2" x2="27" y2="85.4" stroke="#9a9a9a" stroke-width="1.8"/>
<text x="35" y="85" font-size="12" fill="#d4d4d4" textLength="33.5" lengthAdjust="spacingAndGlyphs">Search</text>
<line x1="9" y1="123.5" x2="397.5" y2="123.5" stroke="#2a2a2a" stroke-width="1"/>
<path d="M72 123.5 v-15 a2.5 2.5 0 0 1 2.5 -2.5 h146 a2.5 2.5 0 0 1 2.5 2.5 v15" fill="#3a3a3a" stroke="#2a2a2a"/>
<line x1="139.5" y1="106" x2="139.5" y2="123.5" stroke="#2a2a2a" stroke-width="1"/>
<path d="M18.5 123.8 v-15.3 a2.5 2.5 0 0 1 2.5 -2.5 h48 a2.5 2.5 0 0 1 2.5 2.5 v15.3 z" fill="#4c4c4c" stroke="#2a2a2a"/>
<text x="25.5" y="119.4" font-size="12" fill="#e6e6e6" textLength="39.5" lengthAdjust="spacingAndGlyphs">General</text>
<text x="78.5" y="119.4" font-size="12" fill="#e0e0e0" textLength="55" lengthAdjust="spacingAndGlyphs">Parameters</text>
<text x="147.5" y="119.4" font-size="12" fill="#e0e0e0" textLength="69" lengthAdjust="spacingAndGlyphs">Page Options</text>
<polygon points="10,136.2 10,143.8 14.3,140" fill="#f0f0f0"/>
<text x="18" y="144" font-size="12" fill="#f2f2f2" font-weight="bold" textLength="40" lengthAdjust="spacingAndGlyphs">General</text>
<polygon points="10,167.2 10,174.8 14.3,171" fill="#f0f0f0"/>
<text x="18" y="175" font-size="12" fill="#f2f2f2" font-weight="bold" textLength="35" lengthAdjust="spacingAndGlyphs">Source</text>
<polygon points="10,198.2 10,205.8 14.3,202" fill="#f0f0f0"/>
<text x="18" y="206" font-size="12" fill="#f2f2f2" font-weight="bold" textLength="54.5" lengthAdjust="spacingAndGlyphs">Line Styles</text>
<polygon points="15.3,230.5 15.3,235.5 10,235.5" fill="#f0f0f0"/>
<text x="19" y="237" font-size="12" fill="#f2f2f2" font-weight="bold" textLength="27.5" lengthAdjust="spacingAndGlyphs">Units</text>
<rect x="8.5" y="247" width="391.5" height="259" fill="#4e4e4e" rx="2.5"/>
<rect x="8.5" y="247" width="391.5" height="258.2" fill="#464646" rx="2.5"/>
<text x="112.5" y="269" font-size="12" fill="#e2e2e2" text-anchor="end" textLength="27" lengthAdjust="spacingAndGlyphs">Units</text>
<text x="112.5" y="294" font-size="12" fill="#e2e2e2" text-anchor="end" textLength="55" lengthAdjust="spacingAndGlyphs">Dual_Units</text>
<text x="113" y="319" font-size="12" fill="#e2e2e2" text-anchor="end" textLength="93" lengthAdjust="spacingAndGlyphs">Decimal Separator</text>
<text x="15" y="354" font-size="12" fill="#e2e2e2" textLength="66.5" lengthAdjust="spacingAndGlyphs">Primary Units</text>
<line x1="15" y1="360.5" x2="390" y2="360.5" stroke="#2c2c2c" stroke-width="1"/>
<text x="112.5" y="389" font-size="12" fill="#e2e2e2" text-anchor="end" textLength="76" lengthAdjust="spacingAndGlyphs">Value Precision</text>
<text x="112.5" y="414" font-size="12" fill="#e2e2e2" text-anchor="end" textLength="97.5" lengthAdjust="spacingAndGlyphs">Tolerance Precision</text>
<text x="15" y="433" font-size="12" fill="#e2e2e2" textLength="53.5" lengthAdjust="spacingAndGlyphs">Dual Units</text>
<line x1="15" y1="439.5" x2="390" y2="439.5" stroke="#2c2c2c" stroke-width="1"/>
<text x="112.5" y="468" font-size="12" fill="#e2e2e2" text-anchor="end" textLength="76" lengthAdjust="spacingAndGlyphs">Value Precision</text>
<text x="112.5" y="493" font-size="12" fill="#e2e2e2" text-anchor="end" textLength="97.5" lengthAdjust="spacingAndGlyphs">Tolerance Precision</text>
<rect x="126.2" y="255.5" width="264" height="18.5" fill="url(#ddg)" stroke="#2b2b2b" stroke-width="1" rx="3"/>
<text x="131" y="269" font-size="12" fill="#e6e6e6" textLength="56" lengthAdjust="spacingAndGlyphs">Millimeters</text>
<polygon points="377,262.25 385,262.25 381,267.25" fill="#ffffff"/>
<rect x="126.2" y="377" width="264" height="18.5" fill="url(#ddg)" stroke="#2b2b2b" stroke-width="1" rx="3"/>
<text x="131" y="390.5" font-size="12" fill="#e6e6e6" textLength="58" lengthAdjust="spacingAndGlyphs">0.01 (1/100)</text>
<polygon points="377,383.75 385,383.75 381,388.75" fill="#ffffff"/>
<rect x="126.2" y="402" width="264" height="18.5" fill="url(#ddg)" stroke="#2b2b2b" stroke-width="1" rx="3"/>
<text x="131" y="416" font-size="12" fill="#e6e6e6" textLength="73" lengthAdjust="spacingAndGlyphs">0.001 (1/1 000)</text>
<polygon points="377,408.75 385,408.75 381,413.75" fill="#ffffff"/>
<rect x="126.2" y="456" width="264" height="18.5" fill="url(#ddg)" stroke="#2b2b2b" stroke-width="1" rx="3"/>
<text x="131" y="470.5" font-size="12" fill="#e6e6e6" textLength="31" lengthAdjust="spacingAndGlyphs">1 (1/1)</text>
<polygon points="377,462.75 385,462.75 381,467.75" fill="#ffffff"/>
<rect x="126.2" y="481" width="264" height="18.5" fill="url(#ddg)" stroke="#2b2b2b" stroke-width="1" rx="3"/>
<text x="131" y="495" font-size="12" fill="#e6e6e6" textLength="46" lengthAdjust="spacingAndGlyphs">0.1 (1/10)</text>
<polygon points="377,487.75 385,487.75 381,492.75" fill="#ffffff"/>
<rect x="126" y="275.5" width="264" height="108.5" fill="#303030" stroke="#1f1f1f" stroke-width="1"/>
<rect x="126.5" y="276" width="263" height="18" fill="#5b7fa9"/>
<text x="131" y="289" font-size="12" fill="#f0f0f0" textLength="56" lengthAdjust="spacingAndGlyphs">Millimeters</text>
<text x="131" y="307" font-size="12" fill="#f0f0f0" textLength="20.5" lengthAdjust="spacingAndGlyphs">Mils</text>
<text x="131" y="325" font-size="12" fill="#f0f0f0" textLength="32.5" lengthAdjust="spacingAndGlyphs">Inches</text>
<text x="131" y="343" font-size="12" fill="#f0f0f0" textLength="61" lengthAdjust="spacingAndGlyphs">Centimeters</text>
<text x="131" y="361" font-size="12" fill="#f0f0f0" textLength="35" lengthAdjust="spacingAndGlyphs">Meters</text>
<text x="131" y="379" font-size="12" fill="#f0f0f0" textLength="21.5" lengthAdjust="spacingAndGlyphs">Feet</text>
<rect x="74.75" y="246.75" width="323" height="144.5" fill="none" stroke="#e87a22" stroke-width="3.5" rx="5"/>
<path d="M203.5 265.5 v16.5 l3.8 -3.6 l2.9 6.4 l2.6 -1.2 l-2.9 -6.2 l5.2 0 z" fill="#ffffff" stroke="#111111" stroke-width="1"/>
<text x="9.5" y="712" font-size="12" fill="#dedede" textLength="96.5" lengthAdjust="spacingAndGlyphs">1 object is selected</text>
</svg>
</body></html>
